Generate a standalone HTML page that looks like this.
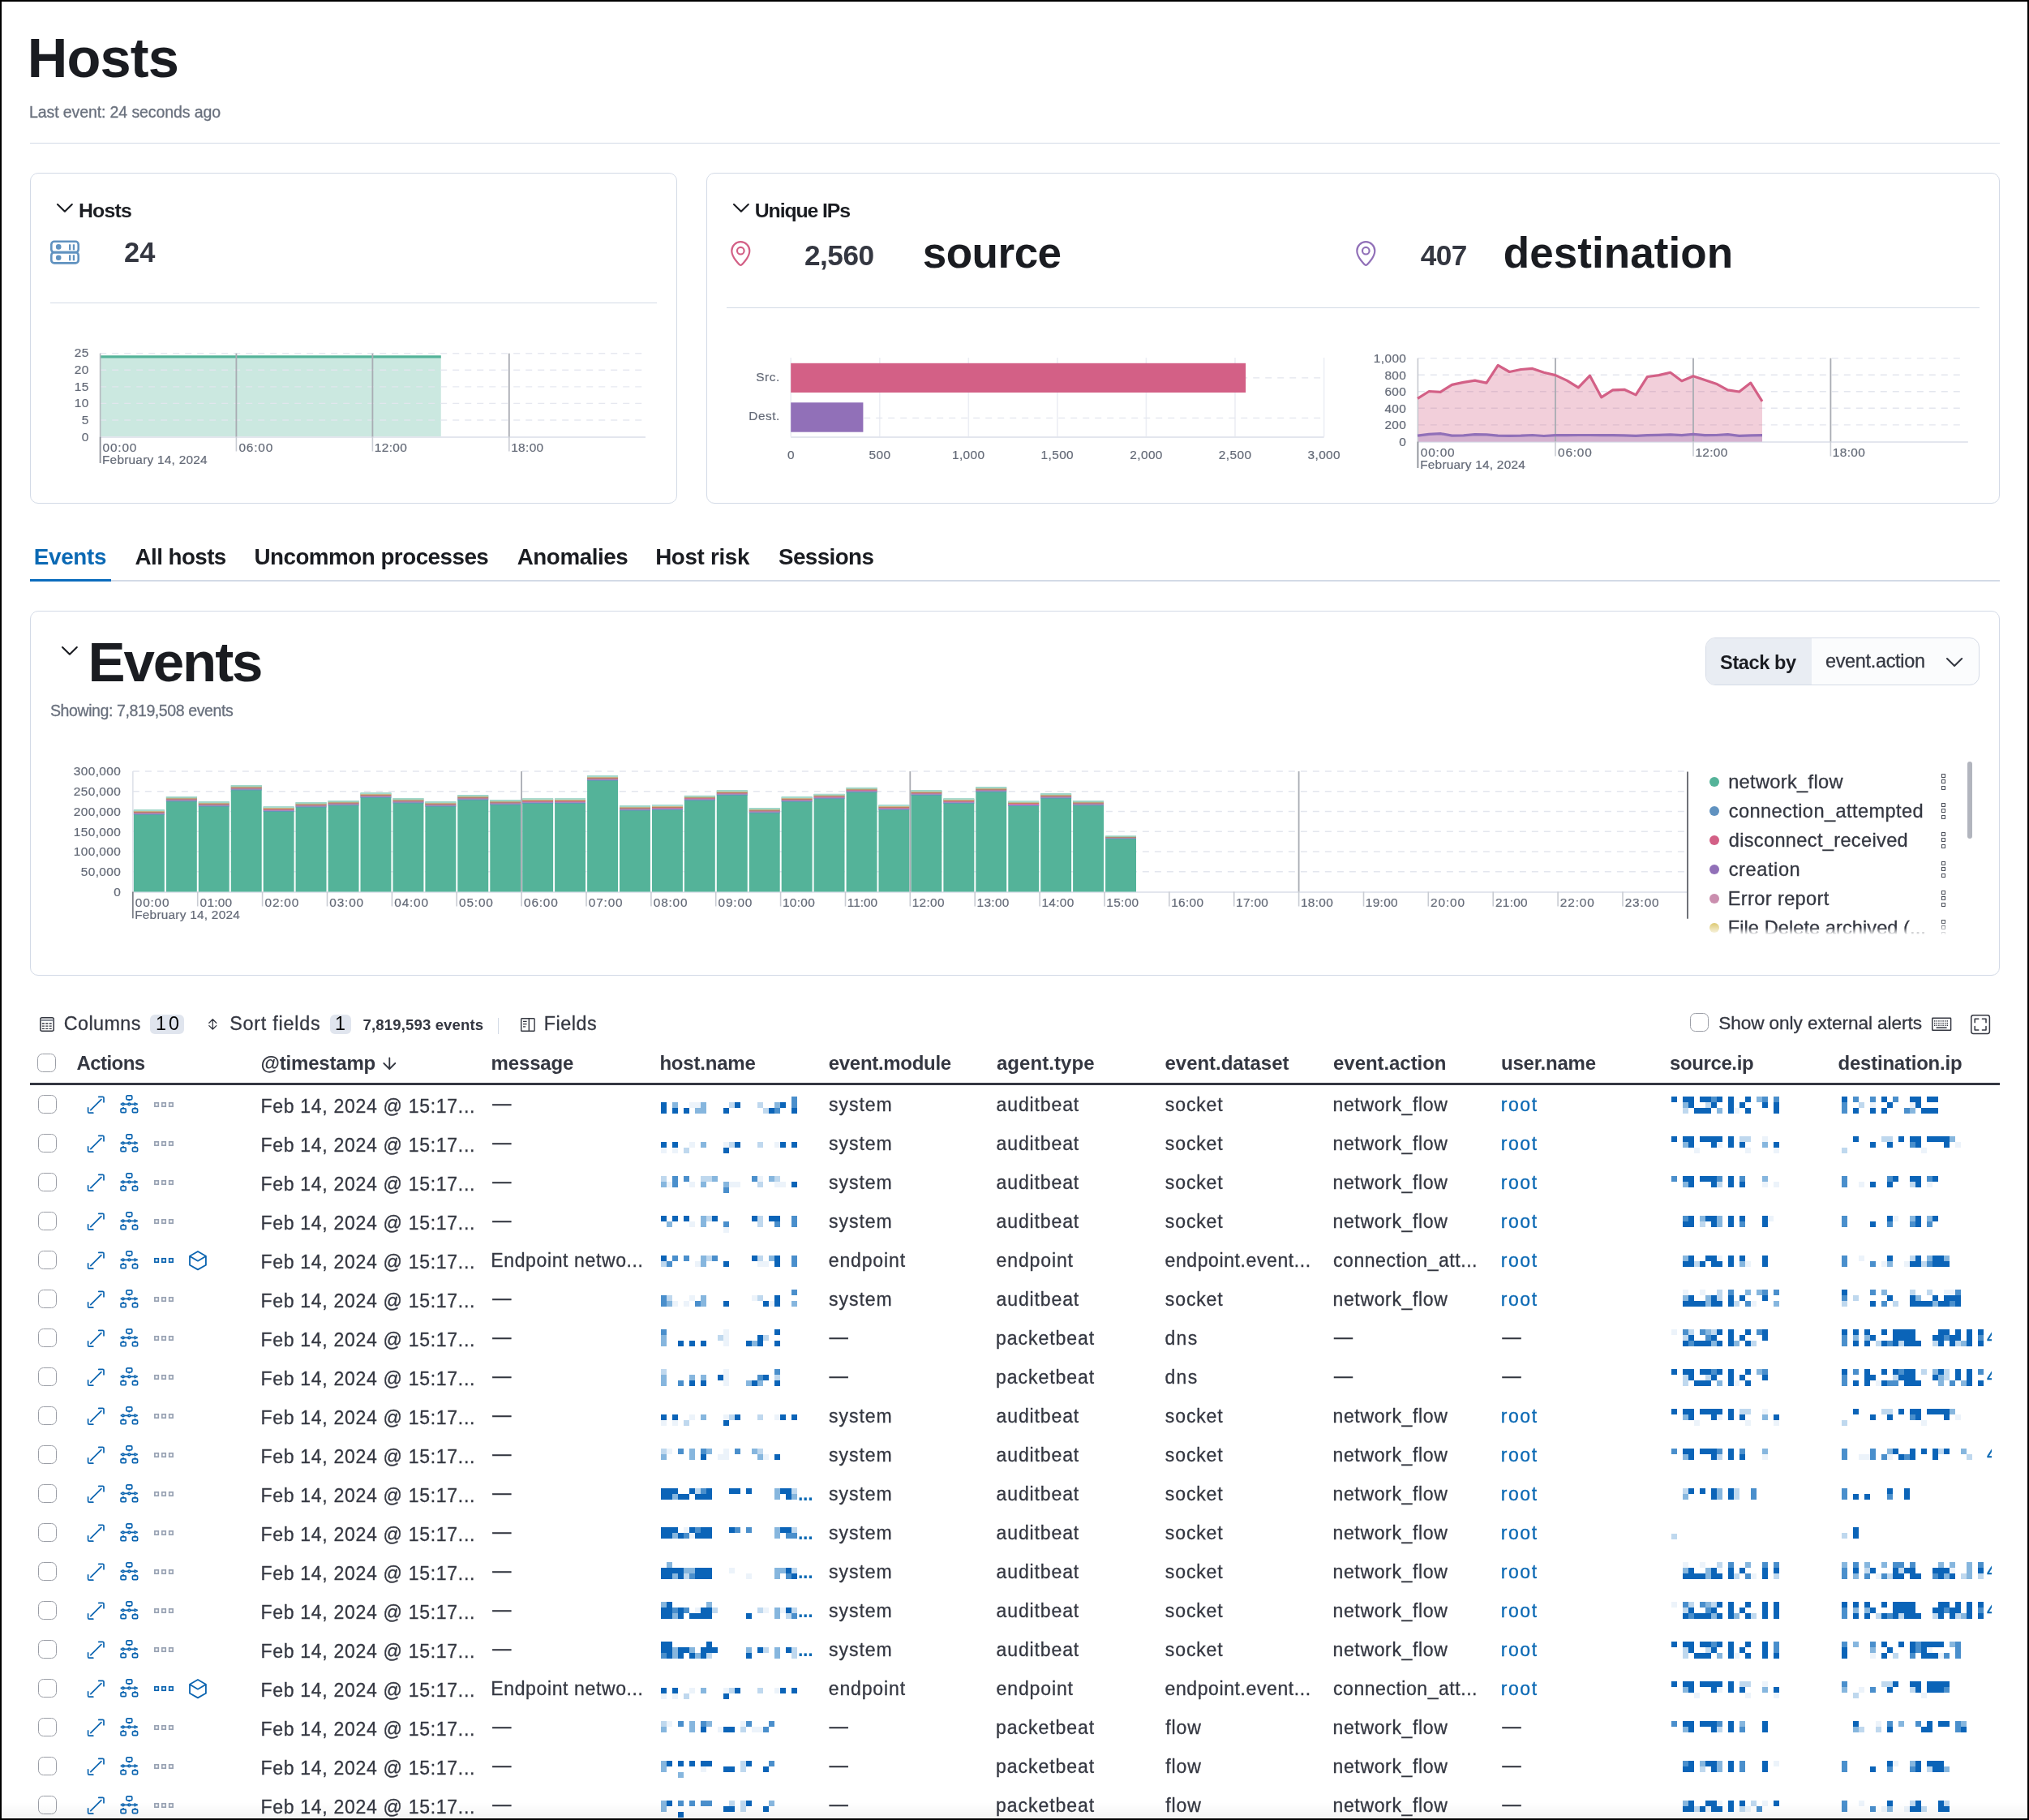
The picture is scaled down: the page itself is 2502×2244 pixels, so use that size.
<!DOCTYPE html>
<html lang="en"><head><meta charset="utf-8"><title>Hosts - Elastic Security</title>
<style>
*{box-sizing:border-box}
html,body{margin:0;padding:0}
body{width:2502px;height:2244px;overflow:hidden;background:#fff;font-family:"Liberation Sans", sans-serif;color:#343741;position:relative}
#page{position:absolute;left:0;top:0;width:2502px;height:2244px;overflow:hidden;will-change:transform}
#page div,#page svg,#page .t{position:absolute}
.t{white-space:nowrap;line-height:1;margin:0;font-weight:400;display:block}
.card{border:1.5px solid #d3dae6;border-radius:10px;background:#fff}
.hr{background:#d3dae6}
.cb{border:1.5px solid #9b9ea6;border-radius:6.5px;background:#fff}
#frame{position:absolute;left:0;top:0;width:2502px;height:2244px;border:2px solid #000;pointer-events:none}
</style></head>
<body><div id="page">
<header>
<h1 class="t" style="left:33.81px;top:38.00px;font-size:68.6px;font-weight:700;color:#1a1c21;letter-spacing:-0.894px;">Hosts</h1>
<span class="t" style="left:36.00px;top:129.00px;font-size:19.5px;color:#69707d;letter-spacing:-0.100px;-webkit-text-stroke:0.3px;">Last event: 24 seconds ago</span>
<div class="hr" style="left:37.0px;top:175.5px;width:2429.0px;height:1.5px;"></div>
</header>
<section aria-label="Hosts">
<div class="card" style="left:37.0px;top:213.0px;width:798.0px;height:408.0px;"></div>
<svg style="left:69px;top:250px" width="21.8" height="13.2" viewBox="69 250 21.8 13.2" ><path d="M71 252 L79.9 260.7 L88.8 252" fill="none" stroke="#1a1c21" stroke-width="2.1" stroke-linecap="round" stroke-linejoin="round"/></svg>
<h2 class="t" style="left:96.94px;top:248.00px;font-size:24.8px;font-weight:700;color:#1a1c21;letter-spacing:-0.733px;">Hosts</h2>
<svg style="left:60px;top:295px" width="40" height="33" viewBox="60 295 40 33" ><g fill="none" stroke="#6092c0" stroke-width="2.6"><rect x="63.3" y="297.8" width="33.4" height="13.3" rx="3.6"/><rect x="63.3" y="311.1" width="33.4" height="13.3" rx="3.6"/></g>
<g fill="#6092c0"><circle cx="72.2" cy="304.4" r="3.3"/><circle cx="72.2" cy="317.7" r="3.3"/><rect x="85" y="301.3" width="2.3" height="7"/><rect x="89.8" y="301.3" width="2.3" height="7"/><rect x="85" y="314.3" width="2.3" height="7"/><rect x="89.8" y="314.3" width="2.3" height="7"/></g></svg>
<span class="t" style="left:153.01px;top:294.00px;font-size:34.4px;font-weight:700;letter-spacing:0.112px;">24</span>
<div class="hr" style="left:62.0px;top:372.6px;width:748.0px;height:1.5px;"></div>
<svg style="left:100px;top:425px" width="710" height="160" viewBox="100 425 710 160" ><rect x="123.2" y="439.8" width="420.59999999999997" height="98.80000000000001" fill="#54b399" fill-opacity="0.3"/><line x1="123.2" x2="792.0" y1="435.7" y2="435.7" stroke="#e3e6ee" stroke-width="1.4" stroke-dasharray="8 7" stroke-opacity="0.9"/><line x1="123.2" x2="792.0" y1="456.3" y2="456.3" stroke="#e3e6ee" stroke-width="1.4" stroke-dasharray="8 7" stroke-opacity="0.9"/><line x1="123.2" x2="792.0" y1="476.9" y2="476.9" stroke="#e3e6ee" stroke-width="1.4" stroke-dasharray="8 7" stroke-opacity="0.9"/><line x1="123.2" x2="792.0" y1="497.4" y2="497.4" stroke="#e3e6ee" stroke-width="1.4" stroke-dasharray="8 7" stroke-opacity="0.9"/><line x1="123.2" x2="792.0" y1="518.0" y2="518.0" stroke="#e3e6ee" stroke-width="1.4" stroke-dasharray="8 7" stroke-opacity="0.9"/><line x1="123.2" x2="796.0" y1="539.1" y2="539.1" stroke="#e3e6ee" stroke-width="2"/><line x1="123.2" x2="543.8" y1="439.8" y2="439.8" stroke="#54b399" stroke-width="3.2"/><line x1="123.6" x2="123.6" y1="435.7" y2="538.6" stroke="#b5b8bf" stroke-width="1.6"/><line x1="123.6" x2="123.6" y1="538.6" y2="571" stroke="#8b8e96" stroke-width="1.8"/><line x1="291.4" x2="291.4" y1="435.7" y2="538.6" stroke="#a9acb3" stroke-width="1.8"/><line x1="291.4" x2="291.4" y1="538.6" y2="556.5" stroke="#c9ccd3" stroke-width="1.6"/><line x1="459.4" x2="459.4" y1="435.7" y2="538.6" stroke="#a9acb3" stroke-width="1.8"/><line x1="459.4" x2="459.4" y1="538.6" y2="556.5" stroke="#c9ccd3" stroke-width="1.6"/><line x1="627.8" x2="627.8" y1="435.7" y2="538.6" stroke="#a9acb3" stroke-width="1.8"/><line x1="627.8" x2="627.8" y1="538.6" y2="556.5" stroke="#c9ccd3" stroke-width="1.6"/></svg>
<span class="t" style="left:91.72px;top:427.00px;font-size:15.4px;color:#646a77;letter-spacing:0.400px;-webkit-text-stroke:0.2px;">25</span>
<span class="t" style="left:91.68px;top:448.00px;font-size:15.4px;color:#646a77;letter-spacing:0.400px;-webkit-text-stroke:0.2px;">20</span>
<span class="t" style="left:91.72px;top:469.00px;font-size:15.4px;color:#646a77;letter-spacing:0.400px;-webkit-text-stroke:0.2px;">15</span>
<span class="t" style="left:91.68px;top:489.00px;font-size:15.4px;color:#646a77;letter-spacing:0.400px;-webkit-text-stroke:0.2px;">10</span>
<span class="t" style="left:100.68px;top:510.00px;font-size:15.4px;color:#646a77;letter-spacing:0.400px;-webkit-text-stroke:0.2px;">5</span>
<span class="t" style="left:100.64px;top:531.00px;font-size:15.4px;color:#646a77;letter-spacing:0.400px;-webkit-text-stroke:0.2px;">0</span>
<span class="t" style="left:126.60px;top:544.00px;font-size:15.4px;color:#646a77;letter-spacing:0.822px;-webkit-text-stroke:0.2px;">00:00</span>
<span class="t" style="left:294.40px;top:544.00px;font-size:15.4px;color:#646a77;letter-spacing:0.822px;-webkit-text-stroke:0.2px;">06:00</span>
<span class="t" style="left:461.83px;top:544.00px;font-size:15.4px;color:#646a77;letter-spacing:0.340px;-webkit-text-stroke:0.2px;">12:00</span>
<span class="t" style="left:630.23px;top:544.00px;font-size:15.4px;color:#646a77;letter-spacing:0.340px;-webkit-text-stroke:0.2px;">18:00</span>
<span class="t" style="left:125.94px;top:559.00px;font-size:15.4px;color:#646a77;letter-spacing:0.246px;-webkit-text-stroke:0.2px;">February 14, 2024</span>
</section>
<section aria-label="Unique IPs">
<div class="card" style="left:871.0px;top:213.0px;width:1595.0px;height:408.0px;"></div>
<svg style="left:903px;top:250px" width="21.8" height="13.2" viewBox="903 250 21.8 13.2" ><path d="M905 252 L913.9 260.7 L922.8 252" fill="none" stroke="#1a1c21" stroke-width="2.1" stroke-linecap="round" stroke-linejoin="round"/></svg>
<h2 class="t" style="left:930.81px;top:248.00px;font-size:24.8px;font-weight:700;color:#1a1c21;letter-spacing:-1.104px;">Unique IPs</h2>
<svg style="left:898.5px;top:295.2px" width="30" height="36" viewBox="898.5 295.2 30 36" ><g transform="translate(900.5,297.2)" fill="none" stroke="#d36086" stroke-width="2.2"><path d="M12.3 30 C11.4 30 1.3 20.6 1.3 12.2 A11 11 0 0 1 23.3 12.2 C23.3 20.6 13.2 30 12.3 30 Z" stroke-linejoin="round"/><circle cx="12.3" cy="12.2" r="4.3"/></g></svg>
<span class="t" style="left:991.98px;top:297.00px;font-size:35.2px;font-weight:700;letter-spacing:-0.500px;">2,560</span>
<span class="t" style="left:1137.74px;top:285.00px;font-size:53px;font-weight:700;color:#1a1c21;letter-spacing:-0.488px;">source</span>
<svg style="left:1670.3px;top:295.2px" width="30" height="36" viewBox="1670.3 295.2 30 36" ><g transform="translate(1672.3,297.2)" fill="none" stroke="#9170b8" stroke-width="2.2"><path d="M12.3 30 C11.4 30 1.3 20.6 1.3 12.2 A11 11 0 0 1 23.3 12.2 C23.3 20.6 13.2 30 12.3 30 Z" stroke-linejoin="round"/><circle cx="12.3" cy="12.2" r="4.3"/></g></svg>
<span class="t" style="left:1751.87px;top:297.00px;font-size:35.2px;font-weight:700;letter-spacing:-0.670px;">407</span>
<span class="t" style="left:1853.73px;top:285.00px;font-size:53px;font-weight:700;color:#1a1c21;letter-spacing:0.067px;">destination</span>
<div class="hr" style="left:896.0px;top:378.5px;width:1545.0px;height:1.5px;"></div>
<svg style="left:960px;top:430px" width="700" height="120" viewBox="960 430 700 120" ><line x1="975.2" x2="975.2" y1="441.0" y2="538.6" stroke="#eceef4" stroke-width="1.6"/><line x1="1084.8" x2="1084.8" y1="441.0" y2="538.6" stroke="#eceef4" stroke-width="1.6"/><line x1="1194.3" x2="1194.3" y1="441.0" y2="538.6" stroke="#eceef4" stroke-width="1.6"/><line x1="1303.9" x2="1303.9" y1="441.0" y2="538.6" stroke="#eceef4" stroke-width="1.6"/><line x1="1413.4" x2="1413.4" y1="441.0" y2="538.6" stroke="#eceef4" stroke-width="1.6"/><line x1="1523.0" x2="1523.0" y1="441.0" y2="538.6" stroke="#eceef4" stroke-width="1.6"/><line x1="1632.6" x2="1632.6" y1="441.0" y2="538.6" stroke="#eceef4" stroke-width="1.6"/><line x1="975.2" x2="1628.6" y1="465.9" y2="465.9" stroke="#e3e6ee" stroke-width="1.4" stroke-dasharray="8 7"/><line x1="975.2" x2="1628.6" y1="515.4" y2="515.4" stroke="#e3e6ee" stroke-width="1.4" stroke-dasharray="8 7"/><line x1="975.2" x2="1632.6" y1="539.1" y2="539.1" stroke="#e3e6ee" stroke-width="2"/><rect x="975.2" y="447.8" width="560.9" height="36.2" fill="#d36086"/><rect x="975.2" y="496.3" width="89.2" height="36.4" fill="#9170b8"/></svg>
<span class="t" style="left:932.33px;top:457.00px;font-size:15.4px;color:#646a77;letter-spacing:0.500px;-webkit-text-stroke:0.2px;">Src.</span>
<span class="t" style="left:923.28px;top:505.00px;font-size:15.4px;color:#646a77;letter-spacing:0.500px;-webkit-text-stroke:0.2px;">Dest.</span>
<span class="t" style="left:970.92px;top:553.00px;font-size:15.4px;color:#646a77;letter-spacing:0.400px;-webkit-text-stroke:0.2px;">0</span>
<span class="t" style="left:1071.51px;top:553.00px;font-size:15.4px;color:#646a77;letter-spacing:0.400px;-webkit-text-stroke:0.2px;">500</span>
<span class="t" style="left:1173.98px;top:553.00px;font-size:15.4px;color:#646a77;letter-spacing:0.400px;-webkit-text-stroke:0.2px;">1,000</span>
<span class="t" style="left:1283.54px;top:553.00px;font-size:15.4px;color:#646a77;letter-spacing:0.400px;-webkit-text-stroke:0.2px;">1,500</span>
<span class="t" style="left:1393.30px;top:553.00px;font-size:15.4px;color:#646a77;letter-spacing:0.400px;-webkit-text-stroke:0.2px;">2,000</span>
<span class="t" style="left:1502.86px;top:553.00px;font-size:15.4px;color:#646a77;letter-spacing:0.400px;-webkit-text-stroke:0.2px;">2,500</span>
<span class="t" style="left:1612.51px;top:553.00px;font-size:15.4px;color:#646a77;letter-spacing:0.400px;-webkit-text-stroke:0.2px;">3,000</span>
<svg style="left:1700px;top:430px" width="740" height="160" viewBox="1700 430 740 160" ><line x1="1748.8" x2="2422.8" y1="441.6" y2="441.6" stroke="#e3e6ee" stroke-width="1.4" stroke-dasharray="8 7"/><line x1="1748.8" x2="2422.8" y1="462.2" y2="462.2" stroke="#e3e6ee" stroke-width="1.4" stroke-dasharray="8 7"/><line x1="1748.8" x2="2422.8" y1="482.8" y2="482.8" stroke="#e3e6ee" stroke-width="1.4" stroke-dasharray="8 7"/><line x1="1748.8" x2="2422.8" y1="503.3" y2="503.3" stroke="#e3e6ee" stroke-width="1.4" stroke-dasharray="8 7"/><line x1="1748.8" x2="2422.8" y1="523.9" y2="523.9" stroke="#e3e6ee" stroke-width="1.4" stroke-dasharray="8 7"/><line x1="1748.8" x2="2426.8" y1="545.0" y2="545.0" stroke="#e3e6ee" stroke-width="2"/><polygon points="1748.0,544.5 1748.0,491.3 1762.2,482.5 1776.3,483.3 1790.5,474.4 1804.7,471.4 1818.8,469.1 1833.0,472.1 1847.2,450.4 1861.3,458.5 1875.5,455.5 1889.7,454.4 1903.8,459.3 1918.0,462.6 1932.2,469.1 1946.3,477.9 1960.5,463.2 1974.7,489.8 1988.8,480.9 2003.0,480.3 2017.2,486.9 2031.3,464.6 2045.5,462.6 2059.7,459.3 2073.8,469.7 2088.0,463.8 2102.2,468.5 2116.3,473.2 2130.5,480.9 2144.7,483.0 2158.8,472.1 2173.0,494.8 2173.0,544.5" fill="#d36086" fill-opacity="0.3"/><polygon points="1748.0,544.5 1748.0,537.1 1762.2,535.4 1776.3,534.6 1790.5,537.1 1804.7,536.8 1818.8,535.7 1833.0,535.9 1847.2,537.1 1861.3,537.3 1875.5,537.1 1889.7,536.5 1903.8,537.5 1918.0,536.7 1932.2,536.7 1946.3,536.5 1960.5,536.5 1974.7,536.7 1988.8,536.7 2003.0,536.9 2017.2,537.3 2031.3,536.7 2045.5,536.3 2059.7,535.9 2073.8,536.7 2088.0,535.4 2102.2,536.7 2116.3,536.5 2130.5,535.7 2144.7,537.3 2158.8,536.9 2173.0,536.7 2173.0,544.5" fill="#9170b8" fill-opacity="0.3"/><line x1="1748.4" x2="1748.4" y1="441.6" y2="544.5" stroke="#c5c8cf" stroke-width="1.6"/><line x1="1748.4" x2="1748.4" y1="544.5" y2="577" stroke="#8b8e96" stroke-width="1.8"/><line x1="1918.0" x2="1918.0" y1="441.6" y2="544.5" stroke="#a9acb3" stroke-width="1.8"/><line x1="1918.0" x2="1918.0" y1="544.5" y2="562.5" stroke="#c9ccd3" stroke-width="1.6"/><line x1="2088.0" x2="2088.0" y1="441.6" y2="544.5" stroke="#a9acb3" stroke-width="1.8"/><line x1="2088.0" x2="2088.0" y1="544.5" y2="562.5" stroke="#c9ccd3" stroke-width="1.6"/><line x1="2257.4" x2="2257.4" y1="441.6" y2="544.5" stroke="#a9acb3" stroke-width="1.8"/><line x1="2257.4" x2="2257.4" y1="544.5" y2="562.5" stroke="#c9ccd3" stroke-width="1.6"/><polyline points="1748.0,491.3 1762.2,482.5 1776.3,483.3 1790.5,474.4 1804.7,471.4 1818.8,469.1 1833.0,472.1 1847.2,450.4 1861.3,458.5 1875.5,455.5 1889.7,454.4 1903.8,459.3 1918.0,462.6 1932.2,469.1 1946.3,477.9 1960.5,463.2 1974.7,489.8 1988.8,480.9 2003.0,480.3 2017.2,486.9 2031.3,464.6 2045.5,462.6 2059.7,459.3 2073.8,469.7 2088.0,463.8 2102.2,468.5 2116.3,473.2 2130.5,480.9 2144.7,483.0 2158.8,472.1 2173.0,494.8" fill="none" stroke="#d36086" stroke-width="3.2" stroke-linejoin="round"/><polyline points="1748.0,537.1 1762.2,535.4 1776.3,534.6 1790.5,537.1 1804.7,536.8 1818.8,535.7 1833.0,535.9 1847.2,537.1 1861.3,537.3 1875.5,537.1 1889.7,536.5 1903.8,537.5 1918.0,536.7 1932.2,536.7 1946.3,536.5 1960.5,536.5 1974.7,536.7 1988.8,536.7 2003.0,536.9 2017.2,537.3 2031.3,536.7 2045.5,536.3 2059.7,535.9 2073.8,536.7 2088.0,535.4 2102.2,536.7 2116.3,536.5 2130.5,535.7 2144.7,537.3 2158.8,536.9 2173.0,536.7" fill="none" stroke="#9170b8" stroke-width="3.2" stroke-linejoin="round"/></svg>
<span class="t" style="left:1693.79px;top:434.00px;font-size:15.4px;color:#646a77;letter-spacing:0.400px;-webkit-text-stroke:0.2px;">1,000</span>
<span class="t" style="left:1707.41px;top:455.00px;font-size:15.4px;color:#646a77;letter-spacing:0.400px;-webkit-text-stroke:0.2px;">800</span>
<span class="t" style="left:1707.41px;top:475.00px;font-size:15.4px;color:#646a77;letter-spacing:0.400px;-webkit-text-stroke:0.2px;">600</span>
<span class="t" style="left:1707.41px;top:496.00px;font-size:15.4px;color:#646a77;letter-spacing:0.400px;-webkit-text-stroke:0.2px;">400</span>
<span class="t" style="left:1707.41px;top:516.00px;font-size:15.4px;color:#646a77;letter-spacing:0.400px;-webkit-text-stroke:0.2px;">200</span>
<span class="t" style="left:1725.34px;top:537.00px;font-size:15.4px;color:#646a77;letter-spacing:0.400px;-webkit-text-stroke:0.2px;">0</span>
<span class="t" style="left:1751.80px;top:550.00px;font-size:15.4px;color:#646a77;letter-spacing:0.822px;-webkit-text-stroke:0.2px;">00:00</span>
<span class="t" style="left:1921.00px;top:550.00px;font-size:15.4px;color:#646a77;letter-spacing:0.822px;-webkit-text-stroke:0.2px;">06:00</span>
<span class="t" style="left:2090.43px;top:550.00px;font-size:15.4px;color:#646a77;letter-spacing:0.340px;-webkit-text-stroke:0.2px;">12:00</span>
<span class="t" style="left:2259.83px;top:550.00px;font-size:15.4px;color:#646a77;letter-spacing:0.340px;-webkit-text-stroke:0.2px;">18:00</span>
<span class="t" style="left:1751.14px;top:565.00px;font-size:15.4px;color:#646a77;letter-spacing:0.246px;-webkit-text-stroke:0.2px;">February 14, 2024</span>
</section>
<nav role="tablist">
<div class="hr" style="left:37.0px;top:715.2px;width:2429.0px;height:2.0px;"></div>
<div style="left:37.0px;top:714.0px;width:100.0px;height:3.0px;background:#0b6cbd"></div>
<span class="t" style="left:41.84px;top:673.00px;font-size:27.8px;font-weight:700;color:#0b69b4;letter-spacing:-0.311px;">Events</span>
<span class="t" style="left:166.61px;top:673.00px;font-size:27.8px;font-weight:700;color:#1a1c21;letter-spacing:-0.582px;">All hosts</span>
<span class="t" style="left:313.43px;top:673.00px;font-size:27.8px;font-weight:700;color:#1a1c21;letter-spacing:-0.514px;">Uncommon processes</span>
<span class="t" style="left:637.71px;top:673.00px;font-size:27.8px;font-weight:700;color:#1a1c21;letter-spacing:-0.443px;">Anomalies</span>
<span class="t" style="left:808.14px;top:673.00px;font-size:27.8px;font-weight:700;color:#1a1c21;letter-spacing:-0.340px;">Host risk</span>
<span class="t" style="left:960.00px;top:673.00px;font-size:27.8px;font-weight:700;color:#1a1c21;letter-spacing:-0.603px;">Sessions</span>
</nav>
<section aria-label="Events histogram">
<div class="card" style="left:37.0px;top:753.0px;width:2429.0px;height:450.0px;"></div>
<svg style="left:74.8px;top:796px" width="21.8" height="13.2" viewBox="74.8 796 21.8 13.2" ><path d="M76.8 798 L85.7 806.7 L94.6 798" fill="none" stroke="#1a1c21" stroke-width="2.1" stroke-linecap="round" stroke-linejoin="round"/></svg>
<h2 class="t" style="left:108.58px;top:782.00px;font-size:69px;font-weight:700;color:#1a1c21;letter-spacing:-2.087px;">Events</h2>
<span class="t" style="left:62.01px;top:867.00px;font-size:19.5px;color:#69707d;letter-spacing:-0.399px;-webkit-text-stroke:0.3px;">Showing: 7,819,508 events</span>
<div style="left:2102.6px;top:786.4px;width:338.0px;height:58.6px;border:1.5px solid #d5dbe6;border-radius:12px;background:#fbfcfd;overflow:hidden"><div style="left:0;top:0;width:130.6px;height:100%;background:#e9edf3"></div></div>
<span class="t" style="left:2121.12px;top:806.00px;font-size:23.6px;font-weight:700;color:#1a1c21;letter-spacing:-0.451px;">Stack by</span>
<span class="t" style="left:2251.01px;top:804.00px;font-size:23.4px;letter-spacing:-0.293px;-webkit-text-stroke:0.3px;">event.action</span>
<svg style="left:2398.9px;top:809.8px" width="22.2" height="13.4" viewBox="2398.9 809.8 22.2 13.4" ><path d="M2400.9 811.8 L2410.0 820.6999999999999 L2419.1 811.8" fill="none" stroke="#343741" stroke-width="2.1" stroke-linecap="round" stroke-linejoin="round"/></svg>
<svg style="left:140px;top:940px" width="1960" height="200" viewBox="140 940 1960 200" ><line x1="163.85" x2="2076.8" y1="951.0" y2="951.0" stroke="#e3e6ee" stroke-width="1.4" stroke-dasharray="8 7"/><line x1="163.85" x2="2076.8" y1="975.8" y2="975.8" stroke="#e3e6ee" stroke-width="1.4" stroke-dasharray="8 7"/><line x1="163.85" x2="2076.8" y1="1000.5" y2="1000.5" stroke="#e3e6ee" stroke-width="1.4" stroke-dasharray="8 7"/><line x1="163.85" x2="2076.8" y1="1025.2" y2="1025.2" stroke="#e3e6ee" stroke-width="1.4" stroke-dasharray="8 7"/><line x1="163.85" x2="2076.8" y1="1050.0" y2="1050.0" stroke="#e3e6ee" stroke-width="1.4" stroke-dasharray="8 7"/><line x1="163.85" x2="2076.8" y1="1074.8" y2="1074.8" stroke="#e3e6ee" stroke-width="1.4" stroke-dasharray="8 7"/><line x1="163.85" x2="2080.8" y1="1100.1" y2="1100.1" stroke="#e3e6ee" stroke-width="2"/><line x1="163.85" x2="163.85" y1="951.0" y2="1099.5" stroke="#dfe2ea" stroke-width="1.6"/><rect x="164.9" y="998.4" width="37.9" height="101.1" fill="#54b399"/><rect x="164.9" y="1003.70" width="37.9" height="0.95" fill="#6092c0"/><rect x="164.9" y="1002.70" width="37.9" height="1.05" fill="#b585c4"/><rect x="164.9" y="1001.60" width="37.9" height="1.15" fill="#dc6a9a"/><rect x="164.9" y="1000.80" width="37.9" height="0.85" fill="#cf7a4f"/><rect x="164.9" y="999.90" width="37.9" height="0.95" fill="#d9b588"/><rect x="164.9" y="998.40" width="37.9" height="1.55" fill="#aadccf"/><rect x="204.9" y="982.1" width="37.9" height="117.4" fill="#54b399"/><rect x="204.9" y="987.40" width="37.9" height="0.95" fill="#6092c0"/><rect x="204.9" y="986.40" width="37.9" height="1.05" fill="#b585c4"/><rect x="204.9" y="985.30" width="37.9" height="1.15" fill="#dc6a9a"/><rect x="204.9" y="984.50" width="37.9" height="0.85" fill="#cf7a4f"/><rect x="204.9" y="983.60" width="37.9" height="0.95" fill="#d9b588"/><rect x="204.9" y="982.10" width="37.9" height="1.55" fill="#aadccf"/><rect x="244.8" y="988.3" width="37.9" height="111.2" fill="#54b399"/><rect x="244.8" y="993.60" width="37.9" height="0.95" fill="#6092c0"/><rect x="244.8" y="992.60" width="37.9" height="1.05" fill="#b585c4"/><rect x="244.8" y="991.50" width="37.9" height="1.15" fill="#dc6a9a"/><rect x="244.8" y="990.70" width="37.9" height="0.85" fill="#cf7a4f"/><rect x="244.8" y="989.80" width="37.9" height="0.95" fill="#d9b588"/><rect x="244.8" y="988.30" width="37.9" height="1.55" fill="#aadccf"/><rect x="284.8" y="968.2" width="37.9" height="131.3" fill="#54b399"/><rect x="284.8" y="973.50" width="37.9" height="0.95" fill="#6092c0"/><rect x="284.8" y="972.50" width="37.9" height="1.05" fill="#b585c4"/><rect x="284.8" y="971.40" width="37.9" height="1.15" fill="#dc6a9a"/><rect x="284.8" y="970.60" width="37.9" height="0.85" fill="#cf7a4f"/><rect x="284.8" y="969.70" width="37.9" height="0.95" fill="#d9b588"/><rect x="284.8" y="968.20" width="37.9" height="1.55" fill="#aadccf"/><rect x="324.7" y="994.5" width="37.9" height="105.0" fill="#54b399"/><rect x="324.7" y="999.80" width="37.9" height="0.95" fill="#6092c0"/><rect x="324.7" y="998.80" width="37.9" height="1.05" fill="#b585c4"/><rect x="324.7" y="997.70" width="37.9" height="1.15" fill="#dc6a9a"/><rect x="324.7" y="996.90" width="37.9" height="0.85" fill="#cf7a4f"/><rect x="324.7" y="996.00" width="37.9" height="0.95" fill="#d9b588"/><rect x="324.7" y="994.50" width="37.9" height="1.55" fill="#aadccf"/><rect x="364.6" y="989.2" width="37.9" height="110.3" fill="#54b399"/><rect x="364.6" y="994.50" width="37.9" height="0.95" fill="#6092c0"/><rect x="364.6" y="993.50" width="37.9" height="1.05" fill="#b585c4"/><rect x="364.6" y="992.40" width="37.9" height="1.15" fill="#dc6a9a"/><rect x="364.6" y="991.60" width="37.9" height="0.85" fill="#cf7a4f"/><rect x="364.6" y="990.70" width="37.9" height="0.95" fill="#d9b588"/><rect x="364.6" y="989.20" width="37.9" height="1.55" fill="#aadccf"/><rect x="404.6" y="987.1" width="37.9" height="112.4" fill="#54b399"/><rect x="404.6" y="992.40" width="37.9" height="0.95" fill="#6092c0"/><rect x="404.6" y="991.40" width="37.9" height="1.05" fill="#b585c4"/><rect x="404.6" y="990.30" width="37.9" height="1.15" fill="#dc6a9a"/><rect x="404.6" y="989.50" width="37.9" height="0.85" fill="#cf7a4f"/><rect x="404.6" y="988.60" width="37.9" height="0.95" fill="#d9b588"/><rect x="404.6" y="987.10" width="37.9" height="1.55" fill="#aadccf"/><rect x="444.5" y="977.4" width="37.9" height="122.1" fill="#54b399"/><rect x="444.5" y="982.70" width="37.9" height="0.95" fill="#6092c0"/><rect x="444.5" y="981.70" width="37.9" height="1.05" fill="#b585c4"/><rect x="444.5" y="980.60" width="37.9" height="1.15" fill="#dc6a9a"/><rect x="444.5" y="979.80" width="37.9" height="0.85" fill="#cf7a4f"/><rect x="444.5" y="978.90" width="37.9" height="0.95" fill="#d9b588"/><rect x="444.5" y="977.40" width="37.9" height="1.55" fill="#aadccf"/><rect x="484.5" y="984.2" width="37.9" height="115.3" fill="#54b399"/><rect x="484.5" y="989.50" width="37.9" height="0.95" fill="#6092c0"/><rect x="484.5" y="988.50" width="37.9" height="1.05" fill="#b585c4"/><rect x="484.5" y="987.40" width="37.9" height="1.15" fill="#dc6a9a"/><rect x="484.5" y="986.60" width="37.9" height="0.85" fill="#cf7a4f"/><rect x="484.5" y="985.70" width="37.9" height="0.95" fill="#d9b588"/><rect x="484.5" y="984.20" width="37.9" height="1.55" fill="#aadccf"/><rect x="524.4" y="988.3" width="37.9" height="111.2" fill="#54b399"/><rect x="524.4" y="993.60" width="37.9" height="0.95" fill="#6092c0"/><rect x="524.4" y="992.60" width="37.9" height="1.05" fill="#b585c4"/><rect x="524.4" y="991.50" width="37.9" height="1.15" fill="#dc6a9a"/><rect x="524.4" y="990.70" width="37.9" height="0.85" fill="#cf7a4f"/><rect x="524.4" y="989.80" width="37.9" height="0.95" fill="#d9b588"/><rect x="524.4" y="988.30" width="37.9" height="1.55" fill="#aadccf"/><rect x="564.3" y="980.3" width="37.9" height="119.2" fill="#54b399"/><rect x="564.3" y="985.60" width="37.9" height="0.95" fill="#6092c0"/><rect x="564.3" y="984.60" width="37.9" height="1.05" fill="#b585c4"/><rect x="564.3" y="983.50" width="37.9" height="1.15" fill="#dc6a9a"/><rect x="564.3" y="982.70" width="37.9" height="0.85" fill="#cf7a4f"/><rect x="564.3" y="981.80" width="37.9" height="0.95" fill="#d9b588"/><rect x="564.3" y="980.30" width="37.9" height="1.55" fill="#aadccf"/><rect x="604.3" y="986.2" width="37.9" height="113.3" fill="#54b399"/><rect x="604.3" y="991.50" width="37.9" height="0.95" fill="#6092c0"/><rect x="604.3" y="990.50" width="37.9" height="1.05" fill="#b585c4"/><rect x="604.3" y="989.40" width="37.9" height="1.15" fill="#dc6a9a"/><rect x="604.3" y="988.60" width="37.9" height="0.85" fill="#cf7a4f"/><rect x="604.3" y="987.70" width="37.9" height="0.95" fill="#d9b588"/><rect x="604.3" y="986.20" width="37.9" height="1.55" fill="#aadccf"/><rect x="644.2" y="984.5" width="37.9" height="115.0" fill="#54b399"/><rect x="644.2" y="989.80" width="37.9" height="0.95" fill="#6092c0"/><rect x="644.2" y="988.80" width="37.9" height="1.05" fill="#b585c4"/><rect x="644.2" y="987.70" width="37.9" height="1.15" fill="#dc6a9a"/><rect x="644.2" y="986.90" width="37.9" height="0.85" fill="#cf7a4f"/><rect x="644.2" y="986.00" width="37.9" height="0.95" fill="#d9b588"/><rect x="644.2" y="984.50" width="37.9" height="1.55" fill="#aadccf"/><rect x="684.1" y="984.5" width="37.9" height="115.0" fill="#54b399"/><rect x="684.1" y="989.80" width="37.9" height="0.95" fill="#6092c0"/><rect x="684.1" y="988.80" width="37.9" height="1.05" fill="#b585c4"/><rect x="684.1" y="987.70" width="37.9" height="1.15" fill="#dc6a9a"/><rect x="684.1" y="986.90" width="37.9" height="0.85" fill="#cf7a4f"/><rect x="684.1" y="986.00" width="37.9" height="0.95" fill="#d9b588"/><rect x="684.1" y="984.50" width="37.9" height="1.55" fill="#aadccf"/><rect x="724.1" y="956.4" width="37.9" height="143.1" fill="#54b399"/><rect x="724.1" y="961.70" width="37.9" height="0.95" fill="#6092c0"/><rect x="724.1" y="960.70" width="37.9" height="1.05" fill="#b585c4"/><rect x="724.1" y="959.60" width="37.9" height="1.15" fill="#dc6a9a"/><rect x="724.1" y="958.80" width="37.9" height="0.85" fill="#cf7a4f"/><rect x="724.1" y="957.90" width="37.9" height="0.95" fill="#d9b588"/><rect x="724.1" y="956.40" width="37.9" height="1.55" fill="#aadccf"/><rect x="764.0" y="993.3" width="37.9" height="106.2" fill="#54b399"/><rect x="764.0" y="998.60" width="37.9" height="0.95" fill="#6092c0"/><rect x="764.0" y="997.60" width="37.9" height="1.05" fill="#b585c4"/><rect x="764.0" y="996.50" width="37.9" height="1.15" fill="#dc6a9a"/><rect x="764.0" y="995.70" width="37.9" height="0.85" fill="#cf7a4f"/><rect x="764.0" y="994.80" width="37.9" height="0.95" fill="#d9b588"/><rect x="764.0" y="993.30" width="37.9" height="1.55" fill="#aadccf"/><rect x="804.0" y="992.5" width="37.9" height="107.0" fill="#54b399"/><rect x="804.0" y="997.80" width="37.9" height="0.95" fill="#6092c0"/><rect x="804.0" y="996.80" width="37.9" height="1.05" fill="#b585c4"/><rect x="804.0" y="995.70" width="37.9" height="1.15" fill="#dc6a9a"/><rect x="804.0" y="994.90" width="37.9" height="0.85" fill="#cf7a4f"/><rect x="804.0" y="994.00" width="37.9" height="0.95" fill="#d9b588"/><rect x="804.0" y="992.50" width="37.9" height="1.55" fill="#aadccf"/><rect x="843.9" y="980.9" width="37.9" height="118.6" fill="#54b399"/><rect x="843.9" y="986.20" width="37.9" height="0.95" fill="#6092c0"/><rect x="843.9" y="985.20" width="37.9" height="1.05" fill="#b585c4"/><rect x="843.9" y="984.10" width="37.9" height="1.15" fill="#dc6a9a"/><rect x="843.9" y="983.30" width="37.9" height="0.85" fill="#cf7a4f"/><rect x="843.9" y="982.40" width="37.9" height="0.95" fill="#d9b588"/><rect x="843.9" y="980.90" width="37.9" height="1.55" fill="#aadccf"/><rect x="883.8" y="974.4" width="37.9" height="125.1" fill="#54b399"/><rect x="883.8" y="979.70" width="37.9" height="0.95" fill="#6092c0"/><rect x="883.8" y="978.70" width="37.9" height="1.05" fill="#b585c4"/><rect x="883.8" y="977.60" width="37.9" height="1.15" fill="#dc6a9a"/><rect x="883.8" y="976.80" width="37.9" height="0.85" fill="#cf7a4f"/><rect x="883.8" y="975.90" width="37.9" height="0.95" fill="#d9b588"/><rect x="883.8" y="974.40" width="37.9" height="1.55" fill="#aadccf"/><rect x="923.8" y="996.3" width="37.9" height="103.2" fill="#54b399"/><rect x="923.8" y="1001.60" width="37.9" height="0.95" fill="#6092c0"/><rect x="923.8" y="1000.60" width="37.9" height="1.05" fill="#b585c4"/><rect x="923.8" y="999.50" width="37.9" height="1.15" fill="#dc6a9a"/><rect x="923.8" y="998.70" width="37.9" height="0.85" fill="#cf7a4f"/><rect x="923.8" y="997.80" width="37.9" height="0.95" fill="#d9b588"/><rect x="923.8" y="996.30" width="37.9" height="1.55" fill="#aadccf"/><rect x="963.7" y="982.4" width="37.9" height="117.1" fill="#54b399"/><rect x="963.7" y="987.70" width="37.9" height="0.95" fill="#6092c0"/><rect x="963.7" y="986.70" width="37.9" height="1.05" fill="#b585c4"/><rect x="963.7" y="985.60" width="37.9" height="1.15" fill="#dc6a9a"/><rect x="963.7" y="984.80" width="37.9" height="0.85" fill="#cf7a4f"/><rect x="963.7" y="983.90" width="37.9" height="0.95" fill="#d9b588"/><rect x="963.7" y="982.40" width="37.9" height="1.55" fill="#aadccf"/><rect x="1003.6" y="978.9" width="37.9" height="120.6" fill="#54b399"/><rect x="1003.6" y="984.20" width="37.9" height="0.95" fill="#6092c0"/><rect x="1003.6" y="983.20" width="37.9" height="1.05" fill="#b585c4"/><rect x="1003.6" y="982.10" width="37.9" height="1.15" fill="#dc6a9a"/><rect x="1003.6" y="981.30" width="37.9" height="0.85" fill="#cf7a4f"/><rect x="1003.6" y="980.40" width="37.9" height="0.95" fill="#d9b588"/><rect x="1003.6" y="978.90" width="37.9" height="1.55" fill="#aadccf"/><rect x="1043.6" y="970.9" width="37.9" height="128.6" fill="#54b399"/><rect x="1043.6" y="976.20" width="37.9" height="0.95" fill="#6092c0"/><rect x="1043.6" y="975.20" width="37.9" height="1.05" fill="#b585c4"/><rect x="1043.6" y="974.10" width="37.9" height="1.15" fill="#dc6a9a"/><rect x="1043.6" y="973.30" width="37.9" height="0.85" fill="#cf7a4f"/><rect x="1043.6" y="972.40" width="37.9" height="0.95" fill="#d9b588"/><rect x="1043.6" y="970.90" width="37.9" height="1.55" fill="#aadccf"/><rect x="1083.5" y="992.5" width="37.9" height="107.0" fill="#54b399"/><rect x="1083.5" y="997.80" width="37.9" height="0.95" fill="#6092c0"/><rect x="1083.5" y="996.80" width="37.9" height="1.05" fill="#b585c4"/><rect x="1083.5" y="995.70" width="37.9" height="1.15" fill="#dc6a9a"/><rect x="1083.5" y="994.90" width="37.9" height="0.85" fill="#cf7a4f"/><rect x="1083.5" y="994.00" width="37.9" height="0.95" fill="#d9b588"/><rect x="1083.5" y="992.50" width="37.9" height="1.55" fill="#aadccf"/><rect x="1123.4" y="974.4" width="37.9" height="125.1" fill="#54b399"/><rect x="1123.4" y="979.70" width="37.9" height="0.95" fill="#6092c0"/><rect x="1123.4" y="978.70" width="37.9" height="1.05" fill="#b585c4"/><rect x="1123.4" y="977.60" width="37.9" height="1.15" fill="#dc6a9a"/><rect x="1123.4" y="976.80" width="37.9" height="0.85" fill="#cf7a4f"/><rect x="1123.4" y="975.90" width="37.9" height="0.95" fill="#d9b588"/><rect x="1123.4" y="974.40" width="37.9" height="1.55" fill="#aadccf"/><rect x="1163.4" y="984.5" width="37.9" height="115.0" fill="#54b399"/><rect x="1163.4" y="989.80" width="37.9" height="0.95" fill="#6092c0"/><rect x="1163.4" y="988.80" width="37.9" height="1.05" fill="#b585c4"/><rect x="1163.4" y="987.70" width="37.9" height="1.15" fill="#dc6a9a"/><rect x="1163.4" y="986.90" width="37.9" height="0.85" fill="#cf7a4f"/><rect x="1163.4" y="986.00" width="37.9" height="0.95" fill="#d9b588"/><rect x="1163.4" y="984.50" width="37.9" height="1.55" fill="#aadccf"/><rect x="1203.3" y="970.3" width="37.9" height="129.2" fill="#54b399"/><rect x="1203.3" y="975.60" width="37.9" height="0.95" fill="#6092c0"/><rect x="1203.3" y="974.60" width="37.9" height="1.05" fill="#b585c4"/><rect x="1203.3" y="973.50" width="37.9" height="1.15" fill="#dc6a9a"/><rect x="1203.3" y="972.70" width="37.9" height="0.85" fill="#cf7a4f"/><rect x="1203.3" y="971.80" width="37.9" height="0.95" fill="#d9b588"/><rect x="1203.3" y="970.30" width="37.9" height="1.55" fill="#aadccf"/><rect x="1243.3" y="987.7" width="37.9" height="111.8" fill="#54b399"/><rect x="1243.3" y="993.00" width="37.9" height="0.95" fill="#6092c0"/><rect x="1243.3" y="992.00" width="37.9" height="1.05" fill="#b585c4"/><rect x="1243.3" y="990.90" width="37.9" height="1.15" fill="#dc6a9a"/><rect x="1243.3" y="990.10" width="37.9" height="0.85" fill="#cf7a4f"/><rect x="1243.3" y="989.20" width="37.9" height="0.95" fill="#d9b588"/><rect x="1243.3" y="987.70" width="37.9" height="1.55" fill="#aadccf"/><rect x="1283.2" y="978.3" width="37.9" height="121.2" fill="#54b399"/><rect x="1283.2" y="983.60" width="37.9" height="0.95" fill="#6092c0"/><rect x="1283.2" y="982.60" width="37.9" height="1.05" fill="#b585c4"/><rect x="1283.2" y="981.50" width="37.9" height="1.15" fill="#dc6a9a"/><rect x="1283.2" y="980.70" width="37.9" height="0.85" fill="#cf7a4f"/><rect x="1283.2" y="979.80" width="37.9" height="0.95" fill="#d9b588"/><rect x="1283.2" y="978.30" width="37.9" height="1.55" fill="#aadccf"/><rect x="1323.1" y="987.1" width="37.9" height="112.4" fill="#54b399"/><rect x="1323.1" y="992.40" width="37.9" height="0.95" fill="#6092c0"/><rect x="1323.1" y="991.40" width="37.9" height="1.05" fill="#b585c4"/><rect x="1323.1" y="990.30" width="37.9" height="1.15" fill="#dc6a9a"/><rect x="1323.1" y="989.50" width="37.9" height="0.85" fill="#cf7a4f"/><rect x="1323.1" y="988.60" width="37.9" height="0.95" fill="#d9b588"/><rect x="1323.1" y="987.10" width="37.9" height="1.55" fill="#aadccf"/><rect x="1363.1" y="1030.6" width="37.9" height="68.9" fill="#54b399"/><rect x="1363.1" y="1033.78" width="37.9" height="0.59" fill="#6092c0"/><rect x="1363.1" y="1033.18" width="37.9" height="0.65" fill="#b585c4"/><rect x="1363.1" y="1032.52" width="37.9" height="0.71" fill="#dc6a9a"/><rect x="1363.1" y="1032.04" width="37.9" height="0.53" fill="#cf7a4f"/><rect x="1363.1" y="1031.50" width="37.9" height="0.59" fill="#d9b588"/><rect x="1363.1" y="1030.60" width="37.9" height="0.95" fill="#aadccf"/><line x1="643.1" x2="643.1" y1="951.0" y2="1099.5" stroke="#a9acb3" stroke-width="1.8"/><line x1="1122.3" x2="1122.3" y1="951.0" y2="1099.5" stroke="#a9acb3" stroke-width="1.8"/><line x1="1601.6" x2="1601.6" y1="951.0" y2="1099.5" stroke="#a9acb3" stroke-width="1.8"/><line x1="163.8" x2="163.8" y1="1099.5" y2="1132.3" stroke="#7d8088" stroke-width="1.8"/><line x1="243.7" x2="243.7" y1="1099.5" y2="1117.5" stroke="#c9ccd3" stroke-width="1.6"/><line x1="323.6" x2="323.6" y1="1099.5" y2="1117.5" stroke="#c9ccd3" stroke-width="1.6"/><line x1="403.5" x2="403.5" y1="1099.5" y2="1117.5" stroke="#c9ccd3" stroke-width="1.6"/><line x1="483.4" x2="483.4" y1="1099.5" y2="1117.5" stroke="#c9ccd3" stroke-width="1.6"/><line x1="563.2" x2="563.2" y1="1099.5" y2="1117.5" stroke="#c9ccd3" stroke-width="1.6"/><line x1="643.1" x2="643.1" y1="1099.5" y2="1117.5" stroke="#c9ccd3" stroke-width="1.6"/><line x1="723.0" x2="723.0" y1="1099.5" y2="1117.5" stroke="#c9ccd3" stroke-width="1.6"/><line x1="802.9" x2="802.9" y1="1099.5" y2="1117.5" stroke="#c9ccd3" stroke-width="1.6"/><line x1="882.7" x2="882.7" y1="1099.5" y2="1117.5" stroke="#c9ccd3" stroke-width="1.6"/><line x1="962.6" x2="962.6" y1="1099.5" y2="1117.5" stroke="#c9ccd3" stroke-width="1.6"/><line x1="1042.5" x2="1042.5" y1="1099.5" y2="1117.5" stroke="#c9ccd3" stroke-width="1.6"/><line x1="1122.3" x2="1122.3" y1="1099.5" y2="1117.5" stroke="#c9ccd3" stroke-width="1.6"/><line x1="1202.2" x2="1202.2" y1="1099.5" y2="1117.5" stroke="#c9ccd3" stroke-width="1.6"/><line x1="1282.1" x2="1282.1" y1="1099.5" y2="1117.5" stroke="#c9ccd3" stroke-width="1.6"/><line x1="1362.0" x2="1362.0" y1="1099.5" y2="1117.5" stroke="#c9ccd3" stroke-width="1.6"/><line x1="1441.8" x2="1441.8" y1="1099.5" y2="1117.5" stroke="#c9ccd3" stroke-width="1.6"/><line x1="1521.7" x2="1521.7" y1="1099.5" y2="1117.5" stroke="#c9ccd3" stroke-width="1.6"/><line x1="1601.6" x2="1601.6" y1="1099.5" y2="1117.5" stroke="#c9ccd3" stroke-width="1.6"/><line x1="1681.5" x2="1681.5" y1="1099.5" y2="1117.5" stroke="#c9ccd3" stroke-width="1.6"/><line x1="1761.3" x2="1761.3" y1="1099.5" y2="1117.5" stroke="#c9ccd3" stroke-width="1.6"/><line x1="1841.2" x2="1841.2" y1="1099.5" y2="1117.5" stroke="#c9ccd3" stroke-width="1.6"/><line x1="1921.1" x2="1921.1" y1="1099.5" y2="1117.5" stroke="#c9ccd3" stroke-width="1.6"/><line x1="2001.0" x2="2001.0" y1="1099.5" y2="1117.5" stroke="#c9ccd3" stroke-width="1.6"/><line x1="2081" x2="2081" y1="951.4" y2="1132.7" stroke="#6f7278" stroke-width="2"/></svg>
<span class="t" style="left:90.76px;top:943.00px;font-size:15.4px;color:#646a77;letter-spacing:0.400px;-webkit-text-stroke:0.2px;">300,000</span>
<span class="t" style="left:90.76px;top:968.00px;font-size:15.4px;color:#646a77;letter-spacing:0.400px;-webkit-text-stroke:0.2px;">250,000</span>
<span class="t" style="left:90.76px;top:993.00px;font-size:15.4px;color:#646a77;letter-spacing:0.400px;-webkit-text-stroke:0.2px;">200,000</span>
<span class="t" style="left:90.76px;top:1018.00px;font-size:15.4px;color:#646a77;letter-spacing:0.400px;-webkit-text-stroke:0.2px;">150,000</span>
<span class="t" style="left:90.76px;top:1042.00px;font-size:15.4px;color:#646a77;letter-spacing:0.400px;-webkit-text-stroke:0.2px;">100,000</span>
<span class="t" style="left:99.72px;top:1067.00px;font-size:15.4px;color:#646a77;letter-spacing:0.400px;-webkit-text-stroke:0.2px;">50,000</span>
<span class="t" style="left:140.24px;top:1092.00px;font-size:15.4px;color:#646a77;letter-spacing:0.400px;-webkit-text-stroke:0.2px;">0</span>
<span class="t" style="left:166.75px;top:1105.00px;font-size:15.4px;color:#646a77;letter-spacing:0.822px;-webkit-text-stroke:0.2px;">00:00</span>
<span class="t" style="left:246.62px;top:1105.00px;font-size:15.4px;color:#646a77;letter-spacing:0.247px;-webkit-text-stroke:0.2px;">01:00</span>
<span class="t" style="left:326.50px;top:1105.00px;font-size:15.4px;color:#646a77;letter-spacing:0.822px;-webkit-text-stroke:0.2px;">02:00</span>
<span class="t" style="left:406.37px;top:1105.00px;font-size:15.4px;color:#646a77;letter-spacing:0.822px;-webkit-text-stroke:0.2px;">03:00</span>
<span class="t" style="left:486.25px;top:1105.00px;font-size:15.4px;color:#646a77;letter-spacing:0.822px;-webkit-text-stroke:0.2px;">04:00</span>
<span class="t" style="left:566.12px;top:1105.00px;font-size:15.4px;color:#646a77;letter-spacing:0.822px;-webkit-text-stroke:0.2px;">05:00</span>
<span class="t" style="left:646.00px;top:1105.00px;font-size:15.4px;color:#646a77;letter-spacing:0.822px;-webkit-text-stroke:0.2px;">06:00</span>
<span class="t" style="left:725.87px;top:1105.00px;font-size:15.4px;color:#646a77;letter-spacing:0.822px;-webkit-text-stroke:0.2px;">07:00</span>
<span class="t" style="left:805.75px;top:1105.00px;font-size:15.4px;color:#646a77;letter-spacing:0.822px;-webkit-text-stroke:0.2px;">08:00</span>
<span class="t" style="left:885.62px;top:1105.00px;font-size:15.4px;color:#646a77;letter-spacing:0.822px;-webkit-text-stroke:0.2px;">09:00</span>
<span class="t" style="left:964.93px;top:1105.00px;font-size:15.4px;color:#646a77;letter-spacing:0.340px;-webkit-text-stroke:0.2px;">10:00</span>
<span class="t" style="left:1044.80px;top:1105.00px;font-size:15.4px;color:#646a77;-webkit-text-stroke:0.2px;">11:00</span>
<span class="t" style="left:1124.68px;top:1105.00px;font-size:15.4px;color:#646a77;letter-spacing:0.340px;-webkit-text-stroke:0.2px;">12:00</span>
<span class="t" style="left:1204.55px;top:1105.00px;font-size:15.4px;color:#646a77;letter-spacing:0.340px;-webkit-text-stroke:0.2px;">13:00</span>
<span class="t" style="left:1284.43px;top:1105.00px;font-size:15.4px;color:#646a77;letter-spacing:0.340px;-webkit-text-stroke:0.2px;">14:00</span>
<span class="t" style="left:1364.30px;top:1105.00px;font-size:15.4px;color:#646a77;letter-spacing:0.340px;-webkit-text-stroke:0.2px;">15:00</span>
<span class="t" style="left:1444.18px;top:1105.00px;font-size:15.4px;color:#646a77;letter-spacing:0.340px;-webkit-text-stroke:0.2px;">16:00</span>
<span class="t" style="left:1524.05px;top:1105.00px;font-size:15.4px;color:#646a77;letter-spacing:0.340px;-webkit-text-stroke:0.2px;">17:00</span>
<span class="t" style="left:1603.93px;top:1105.00px;font-size:15.4px;color:#646a77;letter-spacing:0.340px;-webkit-text-stroke:0.2px;">18:00</span>
<span class="t" style="left:1683.80px;top:1105.00px;font-size:15.4px;color:#646a77;letter-spacing:0.340px;-webkit-text-stroke:0.2px;">19:00</span>
<span class="t" style="left:1764.08px;top:1105.00px;font-size:15.4px;color:#646a77;letter-spacing:0.865px;-webkit-text-stroke:0.2px;">20:00</span>
<span class="t" style="left:1843.95px;top:1105.00px;font-size:15.4px;color:#646a77;letter-spacing:0.290px;-webkit-text-stroke:0.2px;">21:00</span>
<span class="t" style="left:1923.83px;top:1105.00px;font-size:15.4px;color:#646a77;letter-spacing:0.865px;-webkit-text-stroke:0.2px;">22:00</span>
<span class="t" style="left:2003.70px;top:1105.00px;font-size:15.4px;color:#646a77;letter-spacing:0.865px;-webkit-text-stroke:0.2px;">23:00</span>
<span class="t" style="left:166.14px;top:1120.00px;font-size:15.4px;color:#646a77;letter-spacing:0.246px;-webkit-text-stroke:0.2px;">February 14, 2024</span>
<div class="legend" style="left:2095.0px;top:930.0px;width:345.0px;height:221.5px;overflow:hidden;-webkit-mask-image:linear-gradient(to bottom,#000 0,#000 205px,transparent 224px);mask-image:linear-gradient(to bottom,#000 0,#000 205px,transparent 224px)"><div style="left:12.6px;top:27.7px;width:12.4px;height:12.4px;border-radius:50%;background:#54b399"></div><div style="left:298.6px;top:23.7px;width:5.2px;height:5.2px;border:1.3px solid #4a4e58"></div><div style="left:298.6px;top:31.3px;width:5.2px;height:5.2px;border:1.3px solid #4a4e58"></div><div style="left:298.6px;top:38.9px;width:5.2px;height:5.2px;border:1.3px solid #4a4e58"></div><div style="left:12.6px;top:63.7px;width:12.4px;height:12.4px;border-radius:50%;background:#6092c0"></div><div style="left:298.6px;top:59.7px;width:5.2px;height:5.2px;border:1.3px solid #4a4e58"></div><div style="left:298.6px;top:67.3px;width:5.2px;height:5.2px;border:1.3px solid #4a4e58"></div><div style="left:298.6px;top:74.9px;width:5.2px;height:5.2px;border:1.3px solid #4a4e58"></div><div style="left:12.6px;top:99.6px;width:12.4px;height:12.4px;border-radius:50%;background:#d36086"></div><div style="left:298.6px;top:95.6px;width:5.2px;height:5.2px;border:1.3px solid #4a4e58"></div><div style="left:298.6px;top:103.2px;width:5.2px;height:5.2px;border:1.3px solid #4a4e58"></div><div style="left:298.6px;top:110.8px;width:5.2px;height:5.2px;border:1.3px solid #4a4e58"></div><div style="left:12.6px;top:135.6px;width:12.4px;height:12.4px;border-radius:50%;background:#9170b8"></div><div style="left:298.6px;top:131.6px;width:5.2px;height:5.2px;border:1.3px solid #4a4e58"></div><div style="left:298.6px;top:139.2px;width:5.2px;height:5.2px;border:1.3px solid #4a4e58"></div><div style="left:298.6px;top:146.8px;width:5.2px;height:5.2px;border:1.3px solid #4a4e58"></div><div style="left:12.6px;top:171.6px;width:12.4px;height:12.4px;border-radius:50%;background:#ca8eae"></div><div style="left:298.6px;top:167.6px;width:5.2px;height:5.2px;border:1.3px solid #4a4e58"></div><div style="left:298.6px;top:175.2px;width:5.2px;height:5.2px;border:1.3px solid #4a4e58"></div><div style="left:298.6px;top:182.8px;width:5.2px;height:5.2px;border:1.3px solid #4a4e58"></div><div style="left:12.6px;top:207.5px;width:12.4px;height:12.4px;border-radius:50%;background:#d6bf57"></div><div style="left:298.6px;top:203.6px;width:5.2px;height:5.2px;border:1.3px solid #4a4e58"></div><div style="left:298.6px;top:211.2px;width:5.2px;height:5.2px;border:1.3px solid #4a4e58"></div><div style="left:298.6px;top:218.8px;width:5.2px;height:5.2px;border:1.3px solid #4a4e58"></div></div>
<span class="t" style="left:2131.13px;top:953.00px;font-size:23.6px;letter-spacing:0.337px;-webkit-text-stroke:0.3px;">network_flow</span>
<span class="t" style="left:2131.70px;top:989.00px;font-size:23.6px;letter-spacing:0.413px;-webkit-text-stroke:0.3px;">connection_attempted</span>
<span class="t" style="left:2131.71px;top:1025.00px;font-size:23.6px;letter-spacing:0.328px;-webkit-text-stroke:0.3px;">disconnect_received</span>
<span class="t" style="left:2131.70px;top:1061.00px;font-size:23.6px;letter-spacing:0.583px;-webkit-text-stroke:0.3px;">creation</span>
<span class="t" style="left:2130.76px;top:1097.00px;font-size:23.6px;letter-spacing:0.362px;-webkit-text-stroke:0.3px;">Error report</span>
<span class="t" style="left:2130.76px;top:1133.00px;font-size:23.6px;letter-spacing:0.062px;-webkit-text-stroke:0.3px;-webkit-mask-image:linear-gradient(to bottom,#000 0,#000 45%,transparent 80%);mask-image:linear-gradient(to bottom,#000 0,#000 45%,transparent 80%);">File Delete archived (...</span>
<div style="left:2426.4px;top:938.7px;width:5.6px;height:95.5px;background:#b2b5be;border-radius:3px"></div>
</section>
<main role="table" aria-label="Events">
<svg style="left:48px;top:1253px" width="20" height="20" viewBox="48 1253 20 20" ><g transform="translate(49,1254)"><rect x="0.8" y="0.8" width="16.4" height="16.4" rx="2" fill="none" stroke="#343741" stroke-width="1.5"/><rect x="1.5" y="2.8" width="15" height="2.2" fill="#8a8f99"/><g stroke="#343741" stroke-width="1.3" stroke-dasharray="3.1 1.3"><line x1="2.8" x2="15.6" y1="8" y2="8"/><line x1="2.8" x2="15.6" y1="11.1" y2="11.1"/><line x1="2.8" x2="15.6" y1="14.3" y2="14.3"/></g></g></svg>
<span class="t" style="left:78.82px;top:1251.00px;font-size:23.3px;letter-spacing:0.431px;-webkit-text-stroke:0.3px;">Columns</span>
<div style="left:185.3px;top:1251.2px;width:41.6px;height:23.8px;background:#e0e5ee;border-radius:6px"></div>
<span class="t" style="left:192.03px;top:1251.00px;font-size:23.3px;font-weight:500;color:#000;letter-spacing:2.963px;">10</span>
<svg style="left:256px;top:1255px" width="13" height="16" viewBox="256 1255 13 16" ><g transform="translate(257,1256)" fill="none" stroke="#343741" stroke-width="1.3" stroke-linecap="round" stroke-linejoin="round"><path d="M0.8 5.2 L5.3 0.8 L9.8 5.2 M0.8 8.6 L5.3 13 L9.8 8.6 M5.3 1.2 V12.6"/></g></svg>
<span class="t" style="left:283.24px;top:1251.00px;font-size:23.3px;letter-spacing:0.771px;-webkit-text-stroke:0.3px;">Sort fields</span>
<div style="left:407.0px;top:1251.2px;width:25.8px;height:23.8px;background:#e0e5ee;border-radius:6px"></div>
<span class="t" style="left:413.03px;top:1251.00px;font-size:23.3px;font-weight:500;color:#000;">1</span>
<span class="t" style="left:447.60px;top:1255.00px;font-size:18.6px;font-weight:700;letter-spacing:0.117px;">7,819,593 events</span>
<div style="left:614.0px;top:1255.0px;width:1.4px;height:19.5px;background:#d3dae6"></div>
<svg style="left:641px;top:1253.6px" width="20" height="19" viewBox="641 1253.6 20 19" ><g transform="translate(642,1254.6)" fill="none" stroke="#343741" stroke-width="1.4"><rect x="0.7" y="0.7" width="16.4" height="15.6" rx="0.8"/><line x1="10.3" x2="10.3" y1="0.7" y2="16.3"/><path d="M3 4.3h4.6M3 7.6h4.6M3 10.9h3.2" stroke-width="1.3"/></g></svg>
<span class="t" style="left:670.69px;top:1251.00px;font-size:23.3px;letter-spacing:0.539px;-webkit-text-stroke:0.3px;">Fields</span>
<div class="cb" style="left:2083.9px;top:1249.3px;width:22.8px;height:22.8px;"></div>
<span class="t" style="left:2119.17px;top:1251.00px;font-size:22.6px;letter-spacing:-0.066px;-webkit-text-stroke:0.3px;">Show only external alerts</span>
<svg style="left:2381px;top:1253.4px" width="27" height="20" viewBox="2381 1253.4 27 20" ><g transform="translate(2382,1254.4)"><rect x="0.8" y="1.3" width="22.8" height="15" rx="0.6" fill="none" stroke="#343741" stroke-width="1.5"/><rect x="3.0" y="4.2" width="1.4" height="1.4" fill="#343741"/><rect x="5.6" y="4.2" width="1.4" height="1.4" fill="#343741"/><rect x="8.2" y="4.2" width="1.4" height="1.4" fill="#343741"/><rect x="10.8" y="4.2" width="1.4" height="1.4" fill="#343741"/><rect x="13.4" y="4.2" width="1.4" height="1.4" fill="#343741"/><rect x="16.0" y="4.2" width="1.4" height="1.4" fill="#343741"/><rect x="18.6" y="4.2" width="1.4" height="1.4" fill="#343741"/><rect x="3.0" y="6.9" width="1.4" height="1.4" fill="#343741"/><rect x="5.6" y="6.9" width="1.4" height="1.4" fill="#343741"/><rect x="8.2" y="6.9" width="1.4" height="1.4" fill="#343741"/><rect x="10.8" y="6.9" width="1.4" height="1.4" fill="#343741"/><rect x="13.4" y="6.9" width="1.4" height="1.4" fill="#343741"/><rect x="16.0" y="6.9" width="1.4" height="1.4" fill="#343741"/><rect x="18.6" y="6.9" width="1.4" height="1.4" fill="#343741"/><rect x="3.0" y="9.6" width="1.4" height="1.4" fill="#343741"/><rect x="5.6" y="9.6" width="1.4" height="1.4" fill="#343741"/><rect x="8.2" y="9.6" width="1.4" height="1.4" fill="#343741"/><rect x="10.8" y="9.6" width="1.4" height="1.4" fill="#343741"/><rect x="13.4" y="9.6" width="1.4" height="1.4" fill="#343741"/><rect x="16.0" y="9.6" width="1.4" height="1.4" fill="#343741"/><rect x="18.6" y="9.6" width="1.4" height="1.4" fill="#343741"/><rect x="5.6" y="12.3" width="13" height="1.5" fill="#343741"/></g></svg>
<svg style="left:2428.6px;top:1249.6px" width="27" height="27" viewBox="2428.6 1249.6 27 27" ><g transform="translate(2429.6,1250.6)" fill="none" stroke="#343741" stroke-width="1.5"><rect x="0.8" y="0.8" width="22.6" height="22.6" rx="2.6"/><path d="M5.2 9.8V5.2h4.6M14.4 5.2h4.6v4.6M19 14.4v4.6h-4.6M9.8 19H5.2v-4.6" stroke-linecap="round" stroke-linejoin="round"/></g></svg>
<div class="cb" style="left:46.4px;top:1299.3px;width:22.6px;height:22.6px;"></div>
<span class="t" style="left:94.40px;top:1299.00px;font-size:24px;font-weight:700;letter-spacing:-0.539px;">Actions</span>
<span class="t" style="left:321.53px;top:1299.00px;font-size:24px;font-weight:700;letter-spacing:-0.187px;">@timestamp</span>
<span class="t" style="left:605.62px;top:1299.00px;font-size:24px;font-weight:700;letter-spacing:-0.158px;">message</span>
<span class="t" style="left:813.42px;top:1299.00px;font-size:24px;font-weight:700;letter-spacing:-0.204px;">host.name</span>
<span class="t" style="left:1021.76px;top:1299.00px;font-size:24px;font-weight:700;letter-spacing:-0.304px;">event.module</span>
<span class="t" style="left:1228.90px;top:1299.00px;font-size:24px;font-weight:700;letter-spacing:0.066px;">agent.type</span>
<span class="t" style="left:1436.56px;top:1299.00px;font-size:24px;font-weight:700;letter-spacing:-0.040px;">event.dataset</span>
<span class="t" style="left:1644.06px;top:1299.00px;font-size:24px;font-weight:700;letter-spacing:-0.056px;">event.action</span>
<span class="t" style="left:1850.91px;top:1299.00px;font-size:24px;font-weight:700;letter-spacing:-0.191px;">user.name</span>
<span class="t" style="left:2058.96px;top:1299.00px;font-size:24px;font-weight:700;letter-spacing:-0.384px;">source.ip</span>
<span class="t" style="left:2266.52px;top:1299.00px;font-size:24px;font-weight:700;letter-spacing:-0.225px;">destination.ip</span>
<svg style="left:470px;top:1302px" width="20" height="19" viewBox="470 1302 20 19" ><path d="M480.3 1304.3 V1317.4 M473.3 1311 L480.3 1318 L487.3 1311" fill="none" stroke="#343741" stroke-width="1.8" stroke-linecap="round" stroke-linejoin="round"/></svg>
<div style="left:37.0px;top:1335.0px;width:2429.0px;height:3.0px;background:#343741"></div>
<section role="row">
<div class="cb" style="left:47.1px;top:1350.2px;width:22.6px;height:22.6px;"></div>
<svg style="left:0;top:1347.5px" width="270" height="28" viewBox="0 1347.5 270 28"><g transform="translate(107.6,1350.9)" fill="none" stroke="#0b64b0" stroke-width="1.7" stroke-linecap="round" stroke-linejoin="round"><path d="M14.2 1 H19 Q20.4 1 20.4 2.4 V7.4 M17.3 4.2 L4.2 17.3 M1 14.4 V19.4 Q1 20.8 2.4 20.8 H7.2"/></g><g transform="translate(148.1,1349.5)" fill="none" stroke="#0b64b0" stroke-width="1.65" stroke-linejoin="round"><rect x="7.7" y="0.9" width="7" height="5" rx="1.3"/><path d="M11.2 5.9v1.5M3.9 16.9v-2M18.4 16.9v-2M0.5 11.3H21.6" /><rect x="0.9" y="16.9" width="6.2" height="4.7" rx="1.2"/><rect x="15.3" y="16.9" width="6.2" height="4.7" rx="1.2"/><circle cx="3.6" cy="11.3" r="1.35" fill="#fff"/><circle cx="11.2" cy="11.3" r="1.35" fill="#fff"/><path d="M18 9.7 L21 11.3 L18 12.9 Z" fill="#fff" stroke-width="1.3"/></g><g transform="translate(190.0,1358.4)" fill="none" stroke="#98a2b3" stroke-width="1.7"><rect x="0.9" y="0.9" width="4.4" height="4.4"/><rect x="9.8" y="0.9" width="4.4" height="4.4"/><rect x="18.7" y="0.9" width="4.4" height="4.4"/></g></svg>
<span class="t" style="left:321.41px;top:1353.00px;font-size:23px;letter-spacing:0.707px;-webkit-text-stroke:0.3px;">Feb 14, 2024 @ 15:17...</span>
<span class="t" style="left:607.20px;top:1349.00px;font-size:23px;-webkit-text-stroke:0.5px #343741;">—</span>
<svg style="left:814.8px;top:1351.9px" width="168.0" height="21.0" viewBox="0 0 24 3" preserveAspectRatio="none" shape-rendering="crispEdges"><path fill="#4a8fcc" d="M23 0h1v1h-1zM23 1h1v1h-1zM20 2h1v1h-1z"/><path fill="#0b64b8" d="M0 1h1v1h-1zM13 1h1v1h-1zM21 1h1v1h-1zM0 2h1v1h-1zM2 2h1v1h-1zM4 2h1v1h-1zM11 2h1v1h-1zM19 2h1v1h-1zM23 2h1v1h-1z"/><path fill="#86b6de" d="M2 1h1v1h-1zM7 1h1v1h-1zM20 1h1v1h-1zM6 2h1v1h-1zM7 2h1v1h-1z"/><path fill="#ecf3fa" d="M5 1h1v1h-1zM6 1h1v1h-1z"/><path fill="#bfd8ee" d="M12 1h1v1h-1zM17 1h1v1h-1zM18 2h1v1h-1z"/></svg>
<span class="t" style="left:1022.06px;top:1351.00px;font-size:23px;letter-spacing:0.943px;-webkit-text-stroke:0.3px;">system</span>
<span class="t" style="left:1228.62px;top:1351.00px;font-size:23px;letter-spacing:0.876px;-webkit-text-stroke:0.3px;">auditbeat</span>
<span class="t" style="left:1436.86px;top:1351.00px;font-size:23px;letter-spacing:0.865px;-webkit-text-stroke:0.3px;">socket</span>
<span class="t" style="left:1643.47px;top:1351.00px;font-size:23px;letter-spacing:0.649px;-webkit-text-stroke:0.3px;">network_flow</span>
<span class="t" style="left:1850.87px;top:1351.00px;font-size:23px;color:#0b69b4;letter-spacing:1.518px;-webkit-text-stroke:0.3px;">root</span>
<svg style="left:2061.0px;top:1351.9px" width="133.0" height="21.0" viewBox="0 0 19 3" preserveAspectRatio="none" shape-rendering="crispEdges"><path fill="#0b64b8" d="M0 0h1v1h-1zM2 0h1v1h-1zM3 0h1v1h-1zM5 0h1v1h-1zM6 0h1v1h-1zM8 0h1v1h-1zM10 0h1v1h-1zM13 0h1v1h-1zM3 1h1v1h-1zM7 1h1v1h-1zM10 1h1v1h-1zM12 1h1v1h-1zM16 1h1v1h-1zM18 1h1v1h-1zM4 2h1v1h-1zM5 2h1v1h-1zM6 2h1v1h-1zM10 2h1v1h-1zM13 2h1v1h-1zM18 2h1v1h-1z"/><path fill="#4a8fcc" d="M7 0h1v1h-1zM16 0h1v1h-1zM18 0h1v1h-1z"/><path fill="#86b6de" d="M15 0h1v1h-1zM2 1h1v1h-1zM8 2h1v1h-1z"/><path fill="#bfd8ee" d="M6 1h1v1h-1zM2 2h1v1h-1z"/><path fill="#ecf3fa" d="M11 2h1v1h-1z"/></svg>
<svg style="left:2271.2px;top:1351.9px" width="119.0" height="21.0" viewBox="0 0 17 3" preserveAspectRatio="none" shape-rendering="crispEdges"><path fill="#0b64b8" d="M0 0h1v1h-1zM7 0h1v1h-1zM12 0h1v1h-1zM13 0h1v1h-1zM15 0h1v1h-1zM16 0h1v1h-1zM8 1h1v1h-1zM13 1h1v1h-1zM2 2h1v1h-1zM5 2h1v1h-1zM7 2h1v1h-1zM14 2h1v1h-1zM15 2h1v1h-1zM16 2h1v1h-1z"/><path fill="#4a8fcc" d="M2 0h1v1h-1zM5 0h1v1h-1zM9 0h1v1h-1zM0 1h1v1h-1zM0 2h1v1h-1zM11 2h1v1h-1z"/><path fill="#bfd8ee" d="M3 1h1v1h-1z"/><path fill="#ecf3fa" d="M5 1h1v1h-1zM12 1h1v1h-1z"/><path fill="#86b6de" d="M12 2h1v1h-1z"/></svg>
</section>
<section role="row">
<div class="cb" style="left:47.1px;top:1398.2px;width:22.6px;height:22.6px;"></div>
<svg style="left:0;top:1395.5px" width="270" height="28" viewBox="0 1395.5 270 28"><g transform="translate(107.6,1398.9)" fill="none" stroke="#0b64b0" stroke-width="1.7" stroke-linecap="round" stroke-linejoin="round"><path d="M14.2 1 H19 Q20.4 1 20.4 2.4 V7.4 M17.3 4.2 L4.2 17.3 M1 14.4 V19.4 Q1 20.8 2.4 20.8 H7.2"/></g><g transform="translate(148.1,1397.5)" fill="none" stroke="#0b64b0" stroke-width="1.65" stroke-linejoin="round"><rect x="7.7" y="0.9" width="7" height="5" rx="1.3"/><path d="M11.2 5.9v1.5M3.9 16.9v-2M18.4 16.9v-2M0.5 11.3H21.6" /><rect x="0.9" y="16.9" width="6.2" height="4.7" rx="1.2"/><rect x="15.3" y="16.9" width="6.2" height="4.7" rx="1.2"/><circle cx="3.6" cy="11.3" r="1.35" fill="#fff"/><circle cx="11.2" cy="11.3" r="1.35" fill="#fff"/><path d="M18 9.7 L21 11.3 L18 12.9 Z" fill="#fff" stroke-width="1.3"/></g><g transform="translate(190.0,1406.4)" fill="none" stroke="#98a2b3" stroke-width="1.7"><rect x="0.9" y="0.9" width="4.4" height="4.4"/><rect x="9.8" y="0.9" width="4.4" height="4.4"/><rect x="18.7" y="0.9" width="4.4" height="4.4"/></g></svg>
<span class="t" style="left:321.41px;top:1401.00px;font-size:23px;letter-spacing:0.707px;-webkit-text-stroke:0.3px;">Feb 14, 2024 @ 15:17...</span>
<span class="t" style="left:607.20px;top:1397.00px;font-size:23px;-webkit-text-stroke:0.5px #343741;">—</span>
<svg style="left:814.8px;top:1407.8px" width="168.0" height="14.0" viewBox="0 0 24 2" preserveAspectRatio="none" shape-rendering="crispEdges"><path fill="#0b64b8" d="M0 0h1v1h-1zM2 0h1v1h-1zM13 0h1v1h-1zM21 0h1v1h-1zM23 0h1v1h-1zM11 1h1v1h-1z"/><path fill="#ecf3fa" d="M5 0h1v1h-1zM11 0h1v1h-1zM20 0h1v1h-1zM0 1h1v1h-1zM2 1h1v1h-1z"/><path fill="#86b6de" d="M7 0h1v1h-1z"/><path fill="#bfd8ee" d="M12 0h1v1h-1zM17 0h1v1h-1zM4 1h1v1h-1z"/></svg>
<span class="t" style="left:1022.06px;top:1399.00px;font-size:23px;letter-spacing:0.943px;-webkit-text-stroke:0.3px;">system</span>
<span class="t" style="left:1228.62px;top:1399.00px;font-size:23px;letter-spacing:0.876px;-webkit-text-stroke:0.3px;">auditbeat</span>
<span class="t" style="left:1436.86px;top:1399.00px;font-size:23px;letter-spacing:0.865px;-webkit-text-stroke:0.3px;">socket</span>
<span class="t" style="left:1643.47px;top:1399.00px;font-size:23px;letter-spacing:0.649px;-webkit-text-stroke:0.3px;">network_flow</span>
<span class="t" style="left:1850.87px;top:1399.00px;font-size:23px;color:#0b69b4;letter-spacing:1.518px;-webkit-text-stroke:0.3px;">root</span>
<svg style="left:2061.0px;top:1401.2px" width="133.0" height="21.0" viewBox="0 0 19 3" preserveAspectRatio="none" shape-rendering="crispEdges"><path fill="#0b64b8" d="M0 0h1v1h-1zM2 0h1v1h-1zM3 0h1v1h-1zM5 0h1v1h-1zM6 0h1v1h-1zM7 0h1v1h-1zM8 0h1v1h-1zM10 0h1v1h-1zM3 1h1v1h-1zM7 1h1v1h-1zM10 1h1v1h-1zM12 1h1v1h-1zM18 1h1v1h-1z"/><path fill="#bfd8ee" d="M12 0h1v1h-1zM13 0h1v1h-1z"/><path fill="#ecf3fa" d="M16 0h1v1h-1zM8 1h1v1h-1zM4 2h1v1h-1zM13 2h1v1h-1zM18 2h1v1h-1z"/><path fill="#86b6de" d="M2 1h1v1h-1zM16 1h1v1h-1z"/></svg>
<svg style="left:2271.2px;top:1401.2px" width="147.0" height="21.0" viewBox="0 0 21 3" preserveAspectRatio="none" shape-rendering="crispEdges"><path fill="#0b64b8" d="M2 0h1v1h-1zM10 0h1v1h-1zM12 0h1v1h-1zM13 0h1v1h-1zM15 0h1v1h-1zM16 0h1v1h-1zM17 0h1v1h-1zM18 0h1v1h-1zM5 1h1v1h-1zM8 1h1v1h-1zM13 1h1v1h-1zM18 1h1v1h-1z"/><path fill="#bfd8ee" d="M7 0h1v1h-1zM8 0h1v1h-1zM0 2h1v1h-1z"/><path fill="#86b6de" d="M19 0h1v1h-1z"/><path fill="#4a8fcc" d="M12 1h1v1h-1z"/><path fill="#ecf3fa" d="M20 1h1v1h-1zM14 2h1v1h-1z"/></svg>
</section>
<section role="row">
<div class="cb" style="left:47.1px;top:1446.2px;width:22.6px;height:22.6px;"></div>
<svg style="left:0;top:1443.5px" width="270" height="28" viewBox="0 1443.5 270 28"><g transform="translate(107.6,1446.9)" fill="none" stroke="#0b64b0" stroke-width="1.7" stroke-linecap="round" stroke-linejoin="round"><path d="M14.2 1 H19 Q20.4 1 20.4 2.4 V7.4 M17.3 4.2 L4.2 17.3 M1 14.4 V19.4 Q1 20.8 2.4 20.8 H7.2"/></g><g transform="translate(148.1,1445.5)" fill="none" stroke="#0b64b0" stroke-width="1.65" stroke-linejoin="round"><rect x="7.7" y="0.9" width="7" height="5" rx="1.3"/><path d="M11.2 5.9v1.5M3.9 16.9v-2M18.4 16.9v-2M0.5 11.3H21.6" /><rect x="0.9" y="16.9" width="6.2" height="4.7" rx="1.2"/><rect x="15.3" y="16.9" width="6.2" height="4.7" rx="1.2"/><circle cx="3.6" cy="11.3" r="1.35" fill="#fff"/><circle cx="11.2" cy="11.3" r="1.35" fill="#fff"/><path d="M18 9.7 L21 11.3 L18 12.9 Z" fill="#fff" stroke-width="1.3"/></g><g transform="translate(190.0,1454.4)" fill="none" stroke="#98a2b3" stroke-width="1.7"><rect x="0.9" y="0.9" width="4.4" height="4.4"/><rect x="9.8" y="0.9" width="4.4" height="4.4"/><rect x="18.7" y="0.9" width="4.4" height="4.4"/></g></svg>
<span class="t" style="left:321.41px;top:1449.00px;font-size:23px;letter-spacing:0.707px;-webkit-text-stroke:0.3px;">Feb 14, 2024 @ 15:17...</span>
<span class="t" style="left:607.20px;top:1445.00px;font-size:23px;-webkit-text-stroke:0.5px #343741;">—</span>
<svg style="left:814.8px;top:1449.9px" width="168.0" height="21.0" viewBox="0 0 24 3" preserveAspectRatio="none" shape-rendering="crispEdges"><path fill="#bfd8ee" d="M0 0h1v1h-1zM7 0h1v1h-1zM8 0h1v1h-1zM20 0h1v1h-1zM17 1h1v1h-1z"/><path fill="#4a8fcc" d="M2 0h1v1h-1zM4 0h1v1h-1zM16 0h1v1h-1zM2 1h1v1h-1zM11 2h1v1h-1z"/><path fill="#86b6de" d="M9 0h1v1h-1zM19 0h1v1h-1zM0 1h1v1h-1zM7 1h1v1h-1zM11 1h1v1h-1z"/><path fill="#ecf3fa" d="M17 0h1v1h-1zM1 1h1v1h-1zM5 1h1v1h-1zM12 1h1v1h-1zM13 1h1v1h-1zM20 1h1v1h-1zM21 1h1v1h-1z"/><path fill="#0b64b8" d="M23 1h1v1h-1z"/></svg>
<span class="t" style="left:1022.06px;top:1447.00px;font-size:23px;letter-spacing:0.943px;-webkit-text-stroke:0.3px;">system</span>
<span class="t" style="left:1228.62px;top:1447.00px;font-size:23px;letter-spacing:0.876px;-webkit-text-stroke:0.3px;">auditbeat</span>
<span class="t" style="left:1436.86px;top:1447.00px;font-size:23px;letter-spacing:0.865px;-webkit-text-stroke:0.3px;">socket</span>
<span class="t" style="left:1643.47px;top:1447.00px;font-size:23px;letter-spacing:0.649px;-webkit-text-stroke:0.3px;">network_flow</span>
<span class="t" style="left:1850.87px;top:1447.00px;font-size:23px;color:#0b69b4;letter-spacing:1.518px;-webkit-text-stroke:0.3px;">root</span>
<svg style="left:2061.0px;top:1449.9px" width="133.0" height="14.0" viewBox="0 0 19 2" preserveAspectRatio="none" shape-rendering="crispEdges"><path fill="#4a8fcc" d="M0 0h1v1h-1zM8 0h1v1h-1zM12 0h1v1h-1z"/><path fill="#0b64b8" d="M2 0h1v1h-1zM3 0h1v1h-1zM5 0h1v1h-1zM6 0h1v1h-1zM7 0h1v1h-1zM10 0h1v1h-1zM3 1h1v1h-1zM7 1h1v1h-1zM10 1h1v1h-1zM12 1h1v1h-1z"/><path fill="#86b6de" d="M16 0h1v1h-1zM2 1h1v1h-1z"/><path fill="#bfd8ee" d="M8 1h1v1h-1z"/><path fill="#ecf3fa" d="M16 1h1v1h-1zM18 1h1v1h-1z"/></svg>
<svg style="left:2271.2px;top:1449.9px" width="119.0" height="14.0" viewBox="0 0 17 2" preserveAspectRatio="none" shape-rendering="crispEdges"><path fill="#4a8fcc" d="M0 0h1v1h-1zM8 0h1v1h-1zM15 0h1v1h-1zM0 1h1v1h-1z"/><path fill="#0b64b8" d="M9 0h1v1h-1zM12 0h1v1h-1zM13 0h1v1h-1zM16 0h1v1h-1zM5 1h1v1h-1zM8 1h1v1h-1zM13 1h1v1h-1z"/><path fill="#ecf3fa" d="M3 1h1v1h-1zM15 1h1v1h-1z"/><path fill="#bfd8ee" d="M12 1h1v1h-1z"/></svg>
</section>
<section role="row">
<div class="cb" style="left:47.1px;top:1494.2px;width:22.6px;height:22.6px;"></div>
<svg style="left:0;top:1491.5px" width="270" height="28" viewBox="0 1491.5 270 28"><g transform="translate(107.6,1494.9)" fill="none" stroke="#0b64b0" stroke-width="1.7" stroke-linecap="round" stroke-linejoin="round"><path d="M14.2 1 H19 Q20.4 1 20.4 2.4 V7.4 M17.3 4.2 L4.2 17.3 M1 14.4 V19.4 Q1 20.8 2.4 20.8 H7.2"/></g><g transform="translate(148.1,1493.5)" fill="none" stroke="#0b64b0" stroke-width="1.65" stroke-linejoin="round"><rect x="7.7" y="0.9" width="7" height="5" rx="1.3"/><path d="M11.2 5.9v1.5M3.9 16.9v-2M18.4 16.9v-2M0.5 11.3H21.6" /><rect x="0.9" y="16.9" width="6.2" height="4.7" rx="1.2"/><rect x="15.3" y="16.9" width="6.2" height="4.7" rx="1.2"/><circle cx="3.6" cy="11.3" r="1.35" fill="#fff"/><circle cx="11.2" cy="11.3" r="1.35" fill="#fff"/><path d="M18 9.7 L21 11.3 L18 12.9 Z" fill="#fff" stroke-width="1.3"/></g><g transform="translate(190.0,1502.4)" fill="none" stroke="#98a2b3" stroke-width="1.7"><rect x="0.9" y="0.9" width="4.4" height="4.4"/><rect x="9.8" y="0.9" width="4.4" height="4.4"/><rect x="18.7" y="0.9" width="4.4" height="4.4"/></g></svg>
<span class="t" style="left:321.41px;top:1497.00px;font-size:23px;letter-spacing:0.707px;-webkit-text-stroke:0.3px;">Feb 14, 2024 @ 15:17...</span>
<span class="t" style="left:607.20px;top:1493.00px;font-size:23px;-webkit-text-stroke:0.5px #343741;">—</span>
<svg style="left:814.8px;top:1498.7px" width="168.0" height="21.0" viewBox="0 0 24 3" preserveAspectRatio="none" shape-rendering="crispEdges"><path fill="#0b64b8" d="M0 0h1v1h-1zM2 0h1v1h-1zM4 0h1v1h-1zM9 0h1v1h-1zM16 0h1v1h-1zM19 0h1v1h-1zM20 0h1v1h-1z"/><path fill="#86b6de" d="M7 0h1v1h-1zM1 1h1v1h-1zM7 1h1v1h-1z"/><path fill="#bfd8ee" d="M8 0h1v1h-1zM17 0h1v1h-1zM17 1h1v1h-1z"/><path fill="#4a8fcc" d="M23 0h1v1h-1zM11 1h1v1h-1zM20 1h1v1h-1zM23 1h1v1h-1z"/><path fill="#ecf3fa" d="M5 1h1v1h-1zM11 2h1v1h-1z"/></svg>
<span class="t" style="left:1022.06px;top:1495.00px;font-size:23px;letter-spacing:0.943px;-webkit-text-stroke:0.3px;">system</span>
<span class="t" style="left:1228.62px;top:1495.00px;font-size:23px;letter-spacing:0.876px;-webkit-text-stroke:0.3px;">auditbeat</span>
<span class="t" style="left:1436.86px;top:1495.00px;font-size:23px;letter-spacing:0.865px;-webkit-text-stroke:0.3px;">socket</span>
<span class="t" style="left:1643.47px;top:1495.00px;font-size:23px;letter-spacing:0.649px;-webkit-text-stroke:0.3px;">network_flow</span>
<span class="t" style="left:1850.87px;top:1495.00px;font-size:23px;color:#0b69b4;letter-spacing:1.518px;-webkit-text-stroke:0.3px;">root</span>
<svg style="left:2061.0px;top:1498.7px" width="126.0" height="14.0" viewBox="0 0 18 2" preserveAspectRatio="none" shape-rendering="crispEdges"><path fill="#4a8fcc" d="M2 0h1v1h-1zM12 1h1v1h-1z"/><path fill="#0b64b8" d="M3 0h1v1h-1zM6 0h1v1h-1zM7 0h1v1h-1zM10 0h1v1h-1zM12 0h1v1h-1zM16 0h1v1h-1zM2 1h1v1h-1zM3 1h1v1h-1zM7 1h1v1h-1zM10 1h1v1h-1zM16 1h1v1h-1z"/><path fill="#86b6de" d="M5 0h1v1h-1zM8 0h1v1h-1zM8 1h1v1h-1z"/><path fill="#ecf3fa" d="M17 0h1v1h-1z"/><path fill="#bfd8ee" d="M5 1h1v1h-1z"/></svg>
<svg style="left:2271.2px;top:1498.7px" width="119.0" height="14.0" viewBox="0 0 17 2" preserveAspectRatio="none" shape-rendering="crispEdges"><path fill="#4a8fcc" d="M0 0h1v1h-1zM0 1h1v1h-1zM8 1h1v1h-1zM12 1h1v1h-1zM15 1h1v1h-1z"/><path fill="#0b64b8" d="M8 0h1v1h-1zM13 0h1v1h-1zM16 0h1v1h-1zM5 1h1v1h-1zM13 1h1v1h-1z"/><path fill="#ecf3fa" d="M9 0h1v1h-1z"/><path fill="#86b6de" d="M12 0h1v1h-1zM15 0h1v1h-1z"/></svg>
</section>
<section role="row">
<div class="cb" style="left:47.1px;top:1542.2px;width:22.6px;height:22.6px;"></div>
<svg style="left:0;top:1539.5px" width="270" height="28" viewBox="0 1539.5 270 28"><g transform="translate(107.6,1542.9)" fill="none" stroke="#0b64b0" stroke-width="1.7" stroke-linecap="round" stroke-linejoin="round"><path d="M14.2 1 H19 Q20.4 1 20.4 2.4 V7.4 M17.3 4.2 L4.2 17.3 M1 14.4 V19.4 Q1 20.8 2.4 20.8 H7.2"/></g><g transform="translate(148.1,1541.5)" fill="none" stroke="#0b64b0" stroke-width="1.65" stroke-linejoin="round"><rect x="7.7" y="0.9" width="7" height="5" rx="1.3"/><path d="M11.2 5.9v1.5M3.9 16.9v-2M18.4 16.9v-2M0.5 11.3H21.6" /><rect x="0.9" y="16.9" width="6.2" height="4.7" rx="1.2"/><rect x="15.3" y="16.9" width="6.2" height="4.7" rx="1.2"/><circle cx="3.6" cy="11.3" r="1.35" fill="#fff"/><circle cx="11.2" cy="11.3" r="1.35" fill="#fff"/><path d="M18 9.7 L21 11.3 L18 12.9 Z" fill="#fff" stroke-width="1.3"/></g><g transform="translate(190.0,1550.4)" fill="none" stroke="#0b64b0" stroke-width="1.7"><rect x="0.9" y="0.9" width="4.4" height="4.4"/><rect x="9.8" y="0.9" width="4.4" height="4.4"/><rect x="18.7" y="0.9" width="4.4" height="4.4"/></g><g transform="translate(233.3,1541.6)" fill="none" stroke="#0b64b0" stroke-width="1.8" stroke-linejoin="round"><path d="M10.65 0.9 L20.6 6.6 V17.6 L10.65 23.3 L0.7 17.6 V6.6 Z M0.9 6.8 L10.65 12.6 L20.4 6.8"/></g></svg>
<span class="t" style="left:321.41px;top:1545.00px;font-size:23px;letter-spacing:0.707px;-webkit-text-stroke:0.3px;">Feb 14, 2024 @ 15:17...</span>
<span class="t" style="left:605.31px;top:1543.00px;font-size:23px;letter-spacing:0.622px;-webkit-text-stroke:0.3px;">Endpoint netwo...</span>
<svg style="left:814.8px;top:1547.8px" width="168.0" height="14.0" viewBox="0 0 24 2" preserveAspectRatio="none" shape-rendering="crispEdges"><path fill="#0b64b8" d="M0 0h1v1h-1zM16 0h1v1h-1zM20 0h1v1h-1zM11 1h1v1h-1zM20 1h1v1h-1z"/><path fill="#4a8fcc" d="M2 0h1v1h-1zM4 0h1v1h-1zM9 0h1v1h-1zM23 0h1v1h-1zM1 1h1v1h-1zM23 1h1v1h-1z"/><path fill="#86b6de" d="M7 0h1v1h-1zM19 0h1v1h-1zM7 1h1v1h-1z"/><path fill="#bfd8ee" d="M8 0h1v1h-1zM17 0h1v1h-1zM0 1h1v1h-1z"/><path fill="#ecf3fa" d="M6 1h1v1h-1zM17 1h1v1h-1zM18 1h1v1h-1z"/></svg>
<span class="t" style="left:1021.72px;top:1543.00px;font-size:23px;letter-spacing:0.871px;-webkit-text-stroke:0.3px;">endpoint</span>
<span class="t" style="left:1228.62px;top:1543.00px;font-size:23px;letter-spacing:0.871px;-webkit-text-stroke:0.3px;">endpoint</span>
<span class="t" style="left:1436.52px;top:1543.00px;font-size:23px;letter-spacing:0.600px;-webkit-text-stroke:0.3px;">endpoint.event...</span>
<span class="t" style="left:1644.02px;top:1543.00px;font-size:23px;letter-spacing:0.543px;-webkit-text-stroke:0.3px;">connection_att...</span>
<span class="t" style="left:1850.87px;top:1543.00px;font-size:23px;color:#0b69b4;letter-spacing:1.518px;-webkit-text-stroke:0.3px;">root</span>
<svg style="left:2061.0px;top:1547.8px" width="119.0" height="14.0" viewBox="0 0 17 2" preserveAspectRatio="none" shape-rendering="crispEdges"><path fill="#86b6de" d="M2 0h1v1h-1zM12 1h1v1h-1z"/><path fill="#0b64b8" d="M3 0h1v1h-1zM6 0h1v1h-1zM7 0h1v1h-1zM10 0h1v1h-1zM12 0h1v1h-1zM16 0h1v1h-1zM2 1h1v1h-1zM3 1h1v1h-1zM5 1h1v1h-1zM7 1h1v1h-1zM8 1h1v1h-1zM10 1h1v1h-1zM16 1h1v1h-1z"/><path fill="#ecf3fa" d="M8 0h1v1h-1zM13 1h1v1h-1z"/><path fill="#bfd8ee" d="M4 1h1v1h-1z"/></svg>
<svg style="left:2271.2px;top:1547.8px" width="133.0" height="14.0" viewBox="0 0 19 2" preserveAspectRatio="none" shape-rendering="crispEdges"><path fill="#4a8fcc" d="M0 0h1v1h-1zM0 1h1v1h-1zM5 1h1v1h-1zM15 1h1v1h-1z"/><path fill="#ecf3fa" d="M3 0h1v1h-1zM7 1h1v1h-1zM11 1h1v1h-1z"/><path fill="#0b64b8" d="M8 0h1v1h-1zM13 0h1v1h-1zM16 0h1v1h-1zM17 0h1v1h-1zM12 1h1v1h-1zM13 1h1v1h-1zM16 1h1v1h-1zM17 1h1v1h-1zM18 1h1v1h-1z"/><path fill="#bfd8ee" d="M12 0h1v1h-1zM14 1h1v1h-1z"/><path fill="#86b6de" d="M15 0h1v1h-1zM18 0h1v1h-1zM8 1h1v1h-1z"/></svg>
</section>
<section role="row">
<div class="cb" style="left:47.1px;top:1590.2px;width:22.6px;height:22.6px;"></div>
<svg style="left:0;top:1587.5px" width="270" height="28" viewBox="0 1587.5 270 28"><g transform="translate(107.6,1590.9)" fill="none" stroke="#0b64b0" stroke-width="1.7" stroke-linecap="round" stroke-linejoin="round"><path d="M14.2 1 H19 Q20.4 1 20.4 2.4 V7.4 M17.3 4.2 L4.2 17.3 M1 14.4 V19.4 Q1 20.8 2.4 20.8 H7.2"/></g><g transform="translate(148.1,1589.5)" fill="none" stroke="#0b64b0" stroke-width="1.65" stroke-linejoin="round"><rect x="7.7" y="0.9" width="7" height="5" rx="1.3"/><path d="M11.2 5.9v1.5M3.9 16.9v-2M18.4 16.9v-2M0.5 11.3H21.6" /><rect x="0.9" y="16.9" width="6.2" height="4.7" rx="1.2"/><rect x="15.3" y="16.9" width="6.2" height="4.7" rx="1.2"/><circle cx="3.6" cy="11.3" r="1.35" fill="#fff"/><circle cx="11.2" cy="11.3" r="1.35" fill="#fff"/><path d="M18 9.7 L21 11.3 L18 12.9 Z" fill="#fff" stroke-width="1.3"/></g><g transform="translate(190.0,1598.4)" fill="none" stroke="#98a2b3" stroke-width="1.7"><rect x="0.9" y="0.9" width="4.4" height="4.4"/><rect x="9.8" y="0.9" width="4.4" height="4.4"/><rect x="18.7" y="0.9" width="4.4" height="4.4"/></g></svg>
<span class="t" style="left:321.41px;top:1593.00px;font-size:23px;letter-spacing:0.707px;-webkit-text-stroke:0.3px;">Feb 14, 2024 @ 15:17...</span>
<span class="t" style="left:607.20px;top:1589.00px;font-size:23px;-webkit-text-stroke:0.5px #343741;">—</span>
<svg style="left:814.8px;top:1590.1px" width="168.0" height="21.0" viewBox="0 0 24 3" preserveAspectRatio="none" shape-rendering="crispEdges"><path fill="#4a8fcc" d="M23 0h1v1h-1zM0 1h1v1h-1zM0 2h1v1h-1zM6 2h1v1h-1z"/><path fill="#bfd8ee" d="M1 1h1v1h-1zM17 1h1v1h-1z"/><path fill="#ecf3fa" d="M5 1h1v1h-1zM16 1h1v1h-1zM2 2h1v1h-1zM4 2h1v1h-1zM19 2h1v1h-1z"/><path fill="#86b6de" d="M7 1h1v1h-1zM1 2h1v1h-1zM7 2h1v1h-1zM23 2h1v1h-1z"/><path fill="#0b64b8" d="M20 1h1v1h-1zM11 2h1v1h-1zM18 2h1v1h-1zM20 2h1v1h-1z"/></svg>
<span class="t" style="left:1022.06px;top:1591.00px;font-size:23px;letter-spacing:0.943px;-webkit-text-stroke:0.3px;">system</span>
<span class="t" style="left:1228.62px;top:1591.00px;font-size:23px;letter-spacing:0.876px;-webkit-text-stroke:0.3px;">auditbeat</span>
<span class="t" style="left:1436.86px;top:1591.00px;font-size:23px;letter-spacing:0.865px;-webkit-text-stroke:0.3px;">socket</span>
<span class="t" style="left:1643.47px;top:1591.00px;font-size:23px;letter-spacing:0.649px;-webkit-text-stroke:0.3px;">network_flow</span>
<span class="t" style="left:1850.87px;top:1591.00px;font-size:23px;color:#0b69b4;letter-spacing:1.518px;-webkit-text-stroke:0.3px;">root</span>
<svg style="left:2061.0px;top:1590.1px" width="133.0" height="21.0" viewBox="0 0 19 3" preserveAspectRatio="none" shape-rendering="crispEdges"><path fill="#ecf3fa" d="M2 0h1v1h-1zM5 0h1v1h-1zM14 2h1v1h-1z"/><path fill="#bfd8ee" d="M8 0h1v1h-1zM8 1h1v1h-1zM11 2h1v1h-1z"/><path fill="#4a8fcc" d="M10 0h1v1h-1zM16 0h1v1h-1zM18 0h1v1h-1zM13 2h1v1h-1z"/><path fill="#86b6de" d="M13 0h1v1h-1zM15 0h1v1h-1zM2 1h1v1h-1zM6 1h1v1h-1zM6 2h1v1h-1zM18 2h1v1h-1z"/><path fill="#0b64b8" d="M3 1h1v1h-1zM7 1h1v1h-1zM10 1h1v1h-1zM12 1h1v1h-1zM16 1h1v1h-1zM2 2h1v1h-1zM3 2h1v1h-1zM4 2h1v1h-1zM5 2h1v1h-1zM7 2h1v1h-1zM8 2h1v1h-1zM10 2h1v1h-1z"/></svg>
<svg style="left:2271.2px;top:1590.1px" width="147.0" height="21.0" viewBox="0 0 21 3" preserveAspectRatio="none" shape-rendering="crispEdges"><path fill="#0b64b8" d="M0 0h1v1h-1zM8 1h1v1h-1zM12 1h1v1h-1zM16 1h1v1h-1zM18 1h1v1h-1zM19 1h1v1h-1zM20 1h1v1h-1zM5 2h1v1h-1zM12 2h1v1h-1zM13 2h1v1h-1zM14 2h1v1h-1zM15 2h1v1h-1zM17 2h1v1h-1zM18 2h1v1h-1zM20 2h1v1h-1z"/><path fill="#4a8fcc" d="M5 0h1v1h-1zM20 0h1v1h-1zM0 1h1v1h-1zM7 2h1v1h-1zM19 2h1v1h-1z"/><path fill="#86b6de" d="M7 0h1v1h-1zM13 1h1v1h-1zM16 2h1v1h-1z"/><path fill="#bfd8ee" d="M12 0h1v1h-1zM15 0h1v1h-1zM2 1h1v1h-1zM0 2h1v1h-1zM9 2h1v1h-1z"/><path fill="#ecf3fa" d="M18 0h1v1h-1zM19 0h1v1h-1z"/></svg>
</section>
<section role="row">
<div class="cb" style="left:47.1px;top:1638.2px;width:22.6px;height:22.6px;"></div>
<svg style="left:0;top:1635.5px" width="270" height="28" viewBox="0 1635.5 270 28"><g transform="translate(107.6,1638.9)" fill="none" stroke="#0b64b0" stroke-width="1.7" stroke-linecap="round" stroke-linejoin="round"><path d="M14.2 1 H19 Q20.4 1 20.4 2.4 V7.4 M17.3 4.2 L4.2 17.3 M1 14.4 V19.4 Q1 20.8 2.4 20.8 H7.2"/></g><g transform="translate(148.1,1637.5)" fill="none" stroke="#0b64b0" stroke-width="1.65" stroke-linejoin="round"><rect x="7.7" y="0.9" width="7" height="5" rx="1.3"/><path d="M11.2 5.9v1.5M3.9 16.9v-2M18.4 16.9v-2M0.5 11.3H21.6" /><rect x="0.9" y="16.9" width="6.2" height="4.7" rx="1.2"/><rect x="15.3" y="16.9" width="6.2" height="4.7" rx="1.2"/><circle cx="3.6" cy="11.3" r="1.35" fill="#fff"/><circle cx="11.2" cy="11.3" r="1.35" fill="#fff"/><path d="M18 9.7 L21 11.3 L18 12.9 Z" fill="#fff" stroke-width="1.3"/></g><g transform="translate(190.0,1646.4)" fill="none" stroke="#98a2b3" stroke-width="1.7"><rect x="0.9" y="0.9" width="4.4" height="4.4"/><rect x="9.8" y="0.9" width="4.4" height="4.4"/><rect x="18.7" y="0.9" width="4.4" height="4.4"/></g></svg>
<span class="t" style="left:321.41px;top:1641.00px;font-size:23px;letter-spacing:0.707px;-webkit-text-stroke:0.3px;">Feb 14, 2024 @ 15:17...</span>
<span class="t" style="left:607.20px;top:1637.00px;font-size:23px;-webkit-text-stroke:0.5px #343741;">—</span>
<svg style="left:814.8px;top:1639.0px" width="147.0" height="21.0" viewBox="0 0 21 3" preserveAspectRatio="none" shape-rendering="crispEdges"><path fill="#4a8fcc" d="M0 0h1v1h-1z"/><path fill="#ecf3fa" d="M11 0h1v1h-1zM11 1h1v1h-1zM11 2h1v1h-1z"/><path fill="#0b64b8" d="M20 0h1v1h-1zM17 1h1v1h-1zM3 2h1v1h-1zM5 2h1v1h-1zM7 2h1v1h-1zM15 2h1v1h-1zM17 2h1v1h-1zM20 2h1v1h-1z"/><path fill="#86b6de" d="M0 1h1v1h-1zM0 2h1v1h-1zM16 2h1v1h-1z"/><path fill="#bfd8ee" d="M10 1h1v1h-1zM18 1h1v1h-1z"/></svg>
<span class="t" style="left:1022.70px;top:1637.00px;font-size:23px;-webkit-text-stroke:0.5px #343741;">—</span>
<span class="t" style="left:1228.12px;top:1639.00px;font-size:23px;letter-spacing:0.947px;-webkit-text-stroke:0.3px;">packetbeat</span>
<span class="t" style="left:1436.53px;top:1639.00px;font-size:23px;letter-spacing:1.302px;-webkit-text-stroke:0.3px;">dns</span>
<span class="t" style="left:1645.00px;top:1637.00px;font-size:23px;-webkit-text-stroke:0.5px #343741;">—</span>
<span class="t" style="left:1852.40px;top:1637.00px;font-size:23px;-webkit-text-stroke:0.5px #343741;">—</span>
<svg style="left:2061.0px;top:1639.0px" width="119.0" height="21.0" viewBox="0 0 17 3" preserveAspectRatio="none" shape-rendering="crispEdges"><path fill="#ecf3fa" d="M0 0h1v1h-1z"/><path fill="#4a8fcc" d="M2 0h1v1h-1zM5 0h1v1h-1zM15 0h1v1h-1zM6 1h1v1h-1zM3 2h1v1h-1z"/><path fill="#bfd8ee" d="M3 0h1v1h-1zM7 0h1v1h-1zM2 1h1v1h-1zM14 2h1v1h-1z"/><path fill="#86b6de" d="M6 0h1v1h-1zM7 2h1v1h-1zM11 2h1v1h-1z"/><path fill="#0b64b8" d="M8 0h1v1h-1zM10 0h1v1h-1zM13 0h1v1h-1zM16 0h1v1h-1zM3 1h1v1h-1zM7 1h1v1h-1zM10 1h1v1h-1zM12 1h1v1h-1zM16 1h1v1h-1zM2 2h1v1h-1zM4 2h1v1h-1zM5 2h1v1h-1zM6 2h1v1h-1zM8 2h1v1h-1zM10 2h1v1h-1zM13 2h1v1h-1z"/></svg>
<svg style="left:2271.2px;top:1639.0px" width="175.0" height="21.0" viewBox="0 0 25 3" preserveAspectRatio="none" shape-rendering="crispEdges"><path fill="#0b64b8" d="M0 0h1v1h-1zM2 0h1v1h-1zM4 0h1v1h-1zM7 0h1v1h-1zM9 0h1v1h-1zM10 0h1v1h-1zM11 0h1v1h-1zM12 0h1v1h-1zM17 0h1v1h-1zM18 0h1v1h-1zM20 0h1v1h-1zM22 0h1v1h-1zM24 0h1v1h-1zM5 1h1v1h-1zM9 1h1v1h-1zM10 1h1v1h-1zM11 1h1v1h-1zM12 1h1v1h-1zM16 1h1v1h-1zM17 1h1v1h-1zM19 1h1v1h-1zM20 1h1v1h-1zM22 1h1v1h-1zM2 2h1v1h-1zM4 2h1v1h-1zM7 2h1v1h-1zM9 2h1v1h-1zM11 2h1v1h-1zM12 2h1v1h-1zM13 2h1v1h-1zM17 2h1v1h-1zM19 2h1v1h-1zM22 2h1v1h-1zM24 2h1v1h-1z"/><path fill="#4a8fcc" d="M0 1h1v1h-1zM18 1h1v1h-1zM24 1h1v1h-1zM0 2h1v1h-1zM8 2h1v1h-1z"/><path fill="#86b6de" d="M2 1h1v1h-1zM4 1h1v1h-1zM21 2h1v1h-1z"/><path fill="#bfd8ee" d="M6 2h1v1h-1zM10 2h1v1h-1zM16 2h1v1h-1zM20 2h1v1h-1z"/></svg>
<div style="left:2449.5px;top:1635.5px;width:6.3px;height:28px;overflow:hidden"><span class="t" style="left:0.4px;top:2.4px;font-size:23px;color:#0b69b4;-webkit-text-stroke:0.3px">4</span></div>
</section>
<section role="row">
<div class="cb" style="left:47.1px;top:1686.2px;width:22.6px;height:22.6px;"></div>
<svg style="left:0;top:1683.5px" width="270" height="28" viewBox="0 1683.5 270 28"><g transform="translate(107.6,1686.9)" fill="none" stroke="#0b64b0" stroke-width="1.7" stroke-linecap="round" stroke-linejoin="round"><path d="M14.2 1 H19 Q20.4 1 20.4 2.4 V7.4 M17.3 4.2 L4.2 17.3 M1 14.4 V19.4 Q1 20.8 2.4 20.8 H7.2"/></g><g transform="translate(148.1,1685.5)" fill="none" stroke="#0b64b0" stroke-width="1.65" stroke-linejoin="round"><rect x="7.7" y="0.9" width="7" height="5" rx="1.3"/><path d="M11.2 5.9v1.5M3.9 16.9v-2M18.4 16.9v-2M0.5 11.3H21.6" /><rect x="0.9" y="16.9" width="6.2" height="4.7" rx="1.2"/><rect x="15.3" y="16.9" width="6.2" height="4.7" rx="1.2"/><circle cx="3.6" cy="11.3" r="1.35" fill="#fff"/><circle cx="11.2" cy="11.3" r="1.35" fill="#fff"/><path d="M18 9.7 L21 11.3 L18 12.9 Z" fill="#fff" stroke-width="1.3"/></g><g transform="translate(190.0,1694.4)" fill="none" stroke="#98a2b3" stroke-width="1.7"><rect x="0.9" y="0.9" width="4.4" height="4.4"/><rect x="9.8" y="0.9" width="4.4" height="4.4"/><rect x="18.7" y="0.9" width="4.4" height="4.4"/></g></svg>
<span class="t" style="left:321.41px;top:1689.00px;font-size:23px;letter-spacing:0.707px;-webkit-text-stroke:0.3px;">Feb 14, 2024 @ 15:17...</span>
<span class="t" style="left:607.20px;top:1685.00px;font-size:23px;-webkit-text-stroke:0.5px #343741;">—</span>
<svg style="left:814.8px;top:1688.0px" width="147.0" height="21.0" viewBox="0 0 21 3" preserveAspectRatio="none" shape-rendering="crispEdges"><path fill="#bfd8ee" d="M0 0h1v1h-1zM20 1h1v1h-1z"/><path fill="#ecf3fa" d="M11 0h1v1h-1zM11 1h1v1h-1zM11 2h1v1h-1z"/><path fill="#4a8fcc" d="M20 0h1v1h-1zM17 1h1v1h-1zM3 2h1v1h-1z"/><path fill="#86b6de" d="M0 1h1v1h-1zM5 1h1v1h-1zM7 1h1v1h-1zM0 2h1v1h-1zM15 2h1v1h-1zM17 2h1v1h-1z"/><path fill="#0b64b8" d="M10 1h1v1h-1zM18 1h1v1h-1zM5 2h1v1h-1zM7 2h1v1h-1zM16 2h1v1h-1zM20 2h1v1h-1z"/></svg>
<span class="t" style="left:1022.70px;top:1685.00px;font-size:23px;-webkit-text-stroke:0.5px #343741;">—</span>
<span class="t" style="left:1228.12px;top:1687.00px;font-size:23px;letter-spacing:0.947px;-webkit-text-stroke:0.3px;">packetbeat</span>
<span class="t" style="left:1436.53px;top:1687.00px;font-size:23px;letter-spacing:1.302px;-webkit-text-stroke:0.3px;">dns</span>
<span class="t" style="left:1645.00px;top:1685.00px;font-size:23px;-webkit-text-stroke:0.5px #343741;">—</span>
<span class="t" style="left:1852.40px;top:1685.00px;font-size:23px;-webkit-text-stroke:0.5px #343741;">—</span>
<svg style="left:2061.0px;top:1688.0px" width="119.0" height="21.0" viewBox="0 0 17 3" preserveAspectRatio="none" shape-rendering="crispEdges"><path fill="#0b64b8" d="M0 0h1v1h-1zM2 0h1v1h-1zM3 0h1v1h-1zM5 0h1v1h-1zM6 0h1v1h-1zM8 0h1v1h-1zM10 0h1v1h-1zM13 0h1v1h-1zM3 1h1v1h-1zM7 1h1v1h-1zM10 1h1v1h-1zM12 1h1v1h-1zM16 1h1v1h-1zM4 2h1v1h-1zM5 2h1v1h-1zM6 2h1v1h-1zM10 2h1v1h-1zM13 2h1v1h-1z"/><path fill="#4a8fcc" d="M7 0h1v1h-1zM16 0h1v1h-1z"/><path fill="#86b6de" d="M15 0h1v1h-1zM8 2h1v1h-1z"/><path fill="#bfd8ee" d="M2 1h1v1h-1zM6 1h1v1h-1zM2 2h1v1h-1z"/><path fill="#ecf3fa" d="M11 2h1v1h-1z"/></svg>
<svg style="left:2271.2px;top:1688.0px" width="175.0" height="21.0" viewBox="0 0 25 3" preserveAspectRatio="none" shape-rendering="crispEdges"><path fill="#0b64b8" d="M0 0h1v1h-1zM4 0h1v1h-1zM7 0h1v1h-1zM9 0h1v1h-1zM11 0h1v1h-1zM12 0h1v1h-1zM17 0h1v1h-1zM20 0h1v1h-1zM22 0h1v1h-1zM4 1h1v1h-1zM5 1h1v1h-1zM10 1h1v1h-1zM11 1h1v1h-1zM12 1h1v1h-1zM16 1h1v1h-1zM20 1h1v1h-1zM22 1h1v1h-1zM2 2h1v1h-1zM4 2h1v1h-1zM7 2h1v1h-1zM11 2h1v1h-1zM12 2h1v1h-1zM13 2h1v1h-1zM22 2h1v1h-1zM24 2h1v1h-1z"/><path fill="#4a8fcc" d="M2 0h1v1h-1zM10 0h1v1h-1zM24 0h1v1h-1zM0 1h1v1h-1zM0 2h1v1h-1zM8 2h1v1h-1zM9 2h1v1h-1zM19 2h1v1h-1z"/><path fill="#bfd8ee" d="M14 0h1v1h-1zM18 0h1v1h-1zM9 1h1v1h-1zM18 1h1v1h-1z"/><path fill="#86b6de" d="M16 0h1v1h-1zM17 1h1v1h-1zM17 2h1v1h-1zM21 2h1v1h-1z"/><path fill="#ecf3fa" d="M6 2h1v1h-1z"/></svg>
<div style="left:2449.5px;top:1683.5px;width:6.3px;height:28px;overflow:hidden"><span class="t" style="left:0.4px;top:2.4px;font-size:23px;color:#0b69b4;-webkit-text-stroke:0.3px">4</span></div>
</section>
<section role="row">
<div class="cb" style="left:47.1px;top:1734.2px;width:22.6px;height:22.6px;"></div>
<svg style="left:0;top:1731.5px" width="270" height="28" viewBox="0 1731.5 270 28"><g transform="translate(107.6,1734.9)" fill="none" stroke="#0b64b0" stroke-width="1.7" stroke-linecap="round" stroke-linejoin="round"><path d="M14.2 1 H19 Q20.4 1 20.4 2.4 V7.4 M17.3 4.2 L4.2 17.3 M1 14.4 V19.4 Q1 20.8 2.4 20.8 H7.2"/></g><g transform="translate(148.1,1733.5)" fill="none" stroke="#0b64b0" stroke-width="1.65" stroke-linejoin="round"><rect x="7.7" y="0.9" width="7" height="5" rx="1.3"/><path d="M11.2 5.9v1.5M3.9 16.9v-2M18.4 16.9v-2M0.5 11.3H21.6" /><rect x="0.9" y="16.9" width="6.2" height="4.7" rx="1.2"/><rect x="15.3" y="16.9" width="6.2" height="4.7" rx="1.2"/><circle cx="3.6" cy="11.3" r="1.35" fill="#fff"/><circle cx="11.2" cy="11.3" r="1.35" fill="#fff"/><path d="M18 9.7 L21 11.3 L18 12.9 Z" fill="#fff" stroke-width="1.3"/></g><g transform="translate(190.0,1742.4)" fill="none" stroke="#98a2b3" stroke-width="1.7"><rect x="0.9" y="0.9" width="4.4" height="4.4"/><rect x="9.8" y="0.9" width="4.4" height="4.4"/><rect x="18.7" y="0.9" width="4.4" height="4.4"/></g></svg>
<span class="t" style="left:321.41px;top:1737.00px;font-size:23px;letter-spacing:0.707px;-webkit-text-stroke:0.3px;">Feb 14, 2024 @ 15:17...</span>
<span class="t" style="left:607.20px;top:1733.00px;font-size:23px;-webkit-text-stroke:0.5px #343741;">—</span>
<svg style="left:814.8px;top:1744.3px" width="168.0" height="14.0" viewBox="0 0 24 2" preserveAspectRatio="none" shape-rendering="crispEdges"><path fill="#0b64b8" d="M0 0h1v1h-1zM2 0h1v1h-1zM13 0h1v1h-1zM21 0h1v1h-1zM23 0h1v1h-1zM11 1h1v1h-1z"/><path fill="#ecf3fa" d="M5 0h1v1h-1zM11 0h1v1h-1zM20 0h1v1h-1zM0 1h1v1h-1zM2 1h1v1h-1z"/><path fill="#86b6de" d="M7 0h1v1h-1z"/><path fill="#bfd8ee" d="M12 0h1v1h-1zM17 0h1v1h-1zM4 1h1v1h-1z"/></svg>
<span class="t" style="left:1022.06px;top:1735.00px;font-size:23px;letter-spacing:0.943px;-webkit-text-stroke:0.3px;">system</span>
<span class="t" style="left:1228.62px;top:1735.00px;font-size:23px;letter-spacing:0.876px;-webkit-text-stroke:0.3px;">auditbeat</span>
<span class="t" style="left:1436.86px;top:1735.00px;font-size:23px;letter-spacing:0.865px;-webkit-text-stroke:0.3px;">socket</span>
<span class="t" style="left:1643.47px;top:1735.00px;font-size:23px;letter-spacing:0.649px;-webkit-text-stroke:0.3px;">network_flow</span>
<span class="t" style="left:1850.87px;top:1735.00px;font-size:23px;color:#0b69b4;letter-spacing:1.518px;-webkit-text-stroke:0.3px;">root</span>
<svg style="left:2061.0px;top:1737.4px" width="133.0" height="21.0" viewBox="0 0 19 3" preserveAspectRatio="none" shape-rendering="crispEdges"><path fill="#0b64b8" d="M0 0h1v1h-1zM2 0h1v1h-1zM3 0h1v1h-1zM5 0h1v1h-1zM6 0h1v1h-1zM7 0h1v1h-1zM8 0h1v1h-1zM10 0h1v1h-1zM3 1h1v1h-1zM7 1h1v1h-1zM10 1h1v1h-1zM12 1h1v1h-1zM18 1h1v1h-1z"/><path fill="#bfd8ee" d="M12 0h1v1h-1zM13 0h1v1h-1z"/><path fill="#ecf3fa" d="M16 0h1v1h-1zM8 1h1v1h-1zM4 2h1v1h-1zM13 2h1v1h-1zM18 2h1v1h-1z"/><path fill="#86b6de" d="M2 1h1v1h-1zM16 1h1v1h-1z"/></svg>
<svg style="left:2271.2px;top:1737.4px" width="147.0" height="21.0" viewBox="0 0 21 3" preserveAspectRatio="none" shape-rendering="crispEdges"><path fill="#0b64b8" d="M2 0h1v1h-1zM10 0h1v1h-1zM12 0h1v1h-1zM13 0h1v1h-1zM15 0h1v1h-1zM16 0h1v1h-1zM17 0h1v1h-1zM18 0h1v1h-1zM5 1h1v1h-1zM8 1h1v1h-1zM13 1h1v1h-1zM18 1h1v1h-1z"/><path fill="#bfd8ee" d="M7 0h1v1h-1zM8 0h1v1h-1zM0 2h1v1h-1z"/><path fill="#86b6de" d="M19 0h1v1h-1z"/><path fill="#4a8fcc" d="M12 1h1v1h-1z"/><path fill="#ecf3fa" d="M20 1h1v1h-1zM14 2h1v1h-1z"/></svg>
</section>
<section role="row">
<div class="cb" style="left:47.1px;top:1782.2px;width:22.6px;height:22.6px;"></div>
<svg style="left:0;top:1779.5px" width="270" height="28" viewBox="0 1779.5 270 28"><g transform="translate(107.6,1782.9)" fill="none" stroke="#0b64b0" stroke-width="1.7" stroke-linecap="round" stroke-linejoin="round"><path d="M14.2 1 H19 Q20.4 1 20.4 2.4 V7.4 M17.3 4.2 L4.2 17.3 M1 14.4 V19.4 Q1 20.8 2.4 20.8 H7.2"/></g><g transform="translate(148.1,1781.5)" fill="none" stroke="#0b64b0" stroke-width="1.65" stroke-linejoin="round"><rect x="7.7" y="0.9" width="7" height="5" rx="1.3"/><path d="M11.2 5.9v1.5M3.9 16.9v-2M18.4 16.9v-2M0.5 11.3H21.6" /><rect x="0.9" y="16.9" width="6.2" height="4.7" rx="1.2"/><rect x="15.3" y="16.9" width="6.2" height="4.7" rx="1.2"/><circle cx="3.6" cy="11.3" r="1.35" fill="#fff"/><circle cx="11.2" cy="11.3" r="1.35" fill="#fff"/><path d="M18 9.7 L21 11.3 L18 12.9 Z" fill="#fff" stroke-width="1.3"/></g><g transform="translate(190.0,1790.4)" fill="none" stroke="#98a2b3" stroke-width="1.7"><rect x="0.9" y="0.9" width="4.4" height="4.4"/><rect x="9.8" y="0.9" width="4.4" height="4.4"/><rect x="18.7" y="0.9" width="4.4" height="4.4"/></g></svg>
<span class="t" style="left:321.41px;top:1785.00px;font-size:23px;letter-spacing:0.707px;-webkit-text-stroke:0.3px;">Feb 14, 2024 @ 15:17...</span>
<span class="t" style="left:607.20px;top:1781.00px;font-size:23px;-webkit-text-stroke:0.5px #343741;">—</span>
<svg style="left:814.8px;top:1786.4px" width="147.0" height="14.0" viewBox="0 0 21 2" preserveAspectRatio="none" shape-rendering="crispEdges"><path fill="#bfd8ee" d="M0 0h1v1h-1zM17 0h1v1h-1z"/><path fill="#ecf3fa" d="M1 0h1v1h-1zM11 0h1v1h-1zM10 1h1v1h-1zM11 1h1v1h-1zM18 1h1v1h-1z"/><path fill="#4a8fcc" d="M3 0h1v1h-1zM7 0h1v1h-1zM13 0h1v1h-1z"/><path fill="#86b6de" d="M5 0h1v1h-1zM8 0h1v1h-1zM16 0h1v1h-1zM0 1h1v1h-1zM5 1h1v1h-1zM17 1h1v1h-1z"/><path fill="#0b64b8" d="M7 1h1v1h-1zM20 1h1v1h-1z"/></svg>
<span class="t" style="left:1022.06px;top:1783.00px;font-size:23px;letter-spacing:0.943px;-webkit-text-stroke:0.3px;">system</span>
<span class="t" style="left:1228.62px;top:1783.00px;font-size:23px;letter-spacing:0.876px;-webkit-text-stroke:0.3px;">auditbeat</span>
<span class="t" style="left:1436.86px;top:1783.00px;font-size:23px;letter-spacing:0.865px;-webkit-text-stroke:0.3px;">socket</span>
<span class="t" style="left:1643.47px;top:1783.00px;font-size:23px;letter-spacing:0.649px;-webkit-text-stroke:0.3px;">network_flow</span>
<span class="t" style="left:1850.87px;top:1783.00px;font-size:23px;color:#0b69b4;letter-spacing:1.518px;-webkit-text-stroke:0.3px;">root</span>
<svg style="left:2061.0px;top:1786.4px" width="119.0" height="14.0" viewBox="0 0 17 2" preserveAspectRatio="none" shape-rendering="crispEdges"><path fill="#4a8fcc" d="M0 0h1v1h-1zM8 0h1v1h-1zM12 0h1v1h-1z"/><path fill="#0b64b8" d="M2 0h1v1h-1zM3 0h1v1h-1zM5 0h1v1h-1zM6 0h1v1h-1zM7 0h1v1h-1zM10 0h1v1h-1zM3 1h1v1h-1zM7 1h1v1h-1zM10 1h1v1h-1zM12 1h1v1h-1z"/><path fill="#86b6de" d="M16 0h1v1h-1zM2 1h1v1h-1z"/><path fill="#bfd8ee" d="M8 1h1v1h-1z"/><path fill="#ecf3fa" d="M16 1h1v1h-1z"/></svg>
<svg style="left:2271.2px;top:1786.4px" width="161.0" height="14.0" viewBox="0 0 23 2" preserveAspectRatio="none" shape-rendering="crispEdges"><path fill="#4a8fcc" d="M0 0h1v1h-1zM5 0h1v1h-1zM0 1h1v1h-1zM5 1h1v1h-1zM7 1h1v1h-1zM11 1h1v1h-1z"/><path fill="#86b6de" d="M8 0h1v1h-1zM21 0h1v1h-1z"/><path fill="#0b64b8" d="M9 0h1v1h-1zM12 0h1v1h-1zM14 0h1v1h-1zM16 0h1v1h-1zM18 0h1v1h-1zM10 1h1v1h-1zM12 1h1v1h-1zM16 1h1v1h-1z"/><path fill="#bfd8ee" d="M17 0h1v1h-1zM22 1h1v1h-1z"/><path fill="#ecf3fa" d="M3 1h1v1h-1zM4 1h1v1h-1zM8 1h1v1h-1z"/></svg>
<div style="left:2449.5px;top:1779.5px;width:6.3px;height:28px;overflow:hidden"><span class="t" style="left:0.4px;top:2.4px;font-size:23px;color:#0b69b4;-webkit-text-stroke:0.3px">4</span></div>
</section>
<section role="row">
<div class="cb" style="left:47.1px;top:1830.2px;width:22.6px;height:22.6px;"></div>
<svg style="left:0;top:1827.5px" width="270" height="28" viewBox="0 1827.5 270 28"><g transform="translate(107.6,1830.9)" fill="none" stroke="#0b64b0" stroke-width="1.7" stroke-linecap="round" stroke-linejoin="round"><path d="M14.2 1 H19 Q20.4 1 20.4 2.4 V7.4 M17.3 4.2 L4.2 17.3 M1 14.4 V19.4 Q1 20.8 2.4 20.8 H7.2"/></g><g transform="translate(148.1,1829.5)" fill="none" stroke="#0b64b0" stroke-width="1.65" stroke-linejoin="round"><rect x="7.7" y="0.9" width="7" height="5" rx="1.3"/><path d="M11.2 5.9v1.5M3.9 16.9v-2M18.4 16.9v-2M0.5 11.3H21.6" /><rect x="0.9" y="16.9" width="6.2" height="4.7" rx="1.2"/><rect x="15.3" y="16.9" width="6.2" height="4.7" rx="1.2"/><circle cx="3.6" cy="11.3" r="1.35" fill="#fff"/><circle cx="11.2" cy="11.3" r="1.35" fill="#fff"/><path d="M18 9.7 L21 11.3 L18 12.9 Z" fill="#fff" stroke-width="1.3"/></g><g transform="translate(190.0,1838.4)" fill="none" stroke="#98a2b3" stroke-width="1.7"><rect x="0.9" y="0.9" width="4.4" height="4.4"/><rect x="9.8" y="0.9" width="4.4" height="4.4"/><rect x="18.7" y="0.9" width="4.4" height="4.4"/></g></svg>
<span class="t" style="left:321.41px;top:1833.00px;font-size:23px;letter-spacing:0.707px;-webkit-text-stroke:0.3px;">Feb 14, 2024 @ 15:17...</span>
<span class="t" style="left:607.20px;top:1829.00px;font-size:23px;-webkit-text-stroke:0.5px #343741;">—</span>
<svg style="left:814.8px;top:1834.8px" width="168.0" height="14.0" viewBox="0 0 24 2" preserveAspectRatio="none" shape-rendering="crispEdges"><path fill="#0b64b8" d="M0 0h1v1h-1zM1 0h1v1h-1zM2 0h1v1h-1zM5 0h1v1h-1zM8 0h1v1h-1zM12 0h1v1h-1zM13 0h1v1h-1zM15 0h1v1h-1zM21 0h1v1h-1zM22 0h1v1h-1zM0 1h1v1h-1zM1 1h1v1h-1zM3 1h1v1h-1zM4 1h1v1h-1zM6 1h1v1h-1zM7 1h1v1h-1zM8 1h1v1h-1zM22 1h1v1h-1z"/><path fill="#bfd8ee" d="M6 0h1v1h-1zM23 0h1v1h-1z"/><path fill="#4a8fcc" d="M7 0h1v1h-1z"/><path fill="#86b6de" d="M20 0h1v1h-1zM2 1h1v1h-1zM20 1h1v1h-1zM23 1h1v1h-1z"/></svg>
<span class="t" style="left:984.04px;top:1831.00px;font-size:23px;font-weight:700;color:#0b69b4;letter-spacing:-0.314px;">...</span>
<span class="t" style="left:1022.06px;top:1831.00px;font-size:23px;letter-spacing:0.943px;-webkit-text-stroke:0.3px;">system</span>
<span class="t" style="left:1228.62px;top:1831.00px;font-size:23px;letter-spacing:0.876px;-webkit-text-stroke:0.3px;">auditbeat</span>
<span class="t" style="left:1436.86px;top:1831.00px;font-size:23px;letter-spacing:0.865px;-webkit-text-stroke:0.3px;">socket</span>
<span class="t" style="left:1643.47px;top:1831.00px;font-size:23px;letter-spacing:0.649px;-webkit-text-stroke:0.3px;">network_flow</span>
<span class="t" style="left:1850.87px;top:1831.00px;font-size:23px;color:#0b69b4;letter-spacing:1.518px;-webkit-text-stroke:0.3px;">root</span>
<svg style="left:2061.0px;top:1834.8px" width="105.0" height="14.0" viewBox="0 0 15 2" preserveAspectRatio="none" shape-rendering="crispEdges"><path fill="#bfd8ee" d="M2 0h1v1h-1zM11 0h1v1h-1zM11 1h1v1h-1z"/><path fill="#0b64b8" d="M3 0h1v1h-1zM5 0h1v1h-1zM7 0h1v1h-1zM10 0h1v1h-1zM7 1h1v1h-1zM10 1h1v1h-1z"/><path fill="#86b6de" d="M8 0h1v1h-1zM2 1h1v1h-1zM8 1h1v1h-1z"/><path fill="#4a8fcc" d="M14 0h1v1h-1zM14 1h1v1h-1z"/></svg>
<svg style="left:2271.2px;top:1834.8px" width="84.0" height="14.0" viewBox="0 0 12 2" preserveAspectRatio="none" shape-rendering="crispEdges"><path fill="#4a8fcc" d="M0 0h1v1h-1zM0 1h1v1h-1zM8 1h1v1h-1z"/><path fill="#0b64b8" d="M8 0h1v1h-1zM11 0h1v1h-1zM2 1h1v1h-1zM4 1h1v1h-1zM11 1h1v1h-1z"/></svg>
</section>
<section role="row">
<div class="cb" style="left:47.1px;top:1878.2px;width:22.6px;height:22.6px;"></div>
<svg style="left:0;top:1875.5px" width="270" height="28" viewBox="0 1875.5 270 28"><g transform="translate(107.6,1878.9)" fill="none" stroke="#0b64b0" stroke-width="1.7" stroke-linecap="round" stroke-linejoin="round"><path d="M14.2 1 H19 Q20.4 1 20.4 2.4 V7.4 M17.3 4.2 L4.2 17.3 M1 14.4 V19.4 Q1 20.8 2.4 20.8 H7.2"/></g><g transform="translate(148.1,1877.5)" fill="none" stroke="#0b64b0" stroke-width="1.65" stroke-linejoin="round"><rect x="7.7" y="0.9" width="7" height="5" rx="1.3"/><path d="M11.2 5.9v1.5M3.9 16.9v-2M18.4 16.9v-2M0.5 11.3H21.6" /><rect x="0.9" y="16.9" width="6.2" height="4.7" rx="1.2"/><rect x="15.3" y="16.9" width="6.2" height="4.7" rx="1.2"/><circle cx="3.6" cy="11.3" r="1.35" fill="#fff"/><circle cx="11.2" cy="11.3" r="1.35" fill="#fff"/><path d="M18 9.7 L21 11.3 L18 12.9 Z" fill="#fff" stroke-width="1.3"/></g><g transform="translate(190.0,1886.4)" fill="none" stroke="#98a2b3" stroke-width="1.7"><rect x="0.9" y="0.9" width="4.4" height="4.4"/><rect x="9.8" y="0.9" width="4.4" height="4.4"/><rect x="18.7" y="0.9" width="4.4" height="4.4"/></g></svg>
<span class="t" style="left:321.41px;top:1881.00px;font-size:23px;letter-spacing:0.707px;-webkit-text-stroke:0.3px;">Feb 14, 2024 @ 15:17...</span>
<span class="t" style="left:607.20px;top:1877.00px;font-size:23px;-webkit-text-stroke:0.5px #343741;">—</span>
<svg style="left:814.8px;top:1883.3px" width="168.0" height="14.0" viewBox="0 0 24 2" preserveAspectRatio="none" shape-rendering="crispEdges"><path fill="#0b64b8" d="M0 0h1v1h-1zM1 0h1v1h-1zM2 0h1v1h-1zM5 0h1v1h-1zM7 0h1v1h-1zM8 0h1v1h-1zM12 0h1v1h-1zM21 0h1v1h-1zM22 0h1v1h-1zM0 1h1v1h-1zM1 1h1v1h-1zM3 1h1v1h-1zM6 1h1v1h-1zM7 1h1v1h-1zM8 1h1v1h-1z"/><path fill="#ecf3fa" d="M4 0h1v1h-1zM5 1h1v1h-1z"/><path fill="#4a8fcc" d="M6 0h1v1h-1zM13 0h1v1h-1zM15 0h1v1h-1zM4 1h1v1h-1zM22 1h1v1h-1zM23 1h1v1h-1z"/><path fill="#86b6de" d="M20 0h1v1h-1zM2 1h1v1h-1zM20 1h1v1h-1z"/><path fill="#bfd8ee" d="M23 0h1v1h-1z"/></svg>
<span class="t" style="left:984.04px;top:1879.00px;font-size:23px;font-weight:700;color:#0b69b4;letter-spacing:-0.314px;">...</span>
<span class="t" style="left:1022.06px;top:1879.00px;font-size:23px;letter-spacing:0.943px;-webkit-text-stroke:0.3px;">system</span>
<span class="t" style="left:1228.62px;top:1879.00px;font-size:23px;letter-spacing:0.876px;-webkit-text-stroke:0.3px;">auditbeat</span>
<span class="t" style="left:1436.86px;top:1879.00px;font-size:23px;letter-spacing:0.865px;-webkit-text-stroke:0.3px;">socket</span>
<span class="t" style="left:1643.47px;top:1879.00px;font-size:23px;letter-spacing:0.649px;-webkit-text-stroke:0.3px;">network_flow</span>
<span class="t" style="left:1850.87px;top:1879.00px;font-size:23px;color:#0b69b4;letter-spacing:1.518px;-webkit-text-stroke:0.3px;">root</span>
<svg style="left:2061.0px;top:1890.9px" width="7.0" height="7.0" viewBox="0 0 1 1" preserveAspectRatio="none" shape-rendering="crispEdges"><path fill="#bfd8ee" d="M0 0h1v1h-1z"/></svg>
<svg style="left:2271.2px;top:1883.4px" width="21.0" height="14.0" viewBox="0 0 3 2" preserveAspectRatio="none" shape-rendering="crispEdges"><path fill="#0b64b8" d="M2 0h1v1h-1zM2 1h1v1h-1z"/><path fill="#bfd8ee" d="M0 1h1v1h-1z"/></svg>
</section>
<section role="row">
<div class="cb" style="left:47.1px;top:1926.2px;width:22.6px;height:22.6px;"></div>
<svg style="left:0;top:1923.5px" width="270" height="28" viewBox="0 1923.5 270 28"><g transform="translate(107.6,1926.9)" fill="none" stroke="#0b64b0" stroke-width="1.7" stroke-linecap="round" stroke-linejoin="round"><path d="M14.2 1 H19 Q20.4 1 20.4 2.4 V7.4 M17.3 4.2 L4.2 17.3 M1 14.4 V19.4 Q1 20.8 2.4 20.8 H7.2"/></g><g transform="translate(148.1,1925.5)" fill="none" stroke="#0b64b0" stroke-width="1.65" stroke-linejoin="round"><rect x="7.7" y="0.9" width="7" height="5" rx="1.3"/><path d="M11.2 5.9v1.5M3.9 16.9v-2M18.4 16.9v-2M0.5 11.3H21.6" /><rect x="0.9" y="16.9" width="6.2" height="4.7" rx="1.2"/><rect x="15.3" y="16.9" width="6.2" height="4.7" rx="1.2"/><circle cx="3.6" cy="11.3" r="1.35" fill="#fff"/><circle cx="11.2" cy="11.3" r="1.35" fill="#fff"/><path d="M18 9.7 L21 11.3 L18 12.9 Z" fill="#fff" stroke-width="1.3"/></g><g transform="translate(190.0,1934.4)" fill="none" stroke="#98a2b3" stroke-width="1.7"><rect x="0.9" y="0.9" width="4.4" height="4.4"/><rect x="9.8" y="0.9" width="4.4" height="4.4"/><rect x="18.7" y="0.9" width="4.4" height="4.4"/></g></svg>
<span class="t" style="left:321.41px;top:1929.00px;font-size:23px;letter-spacing:0.707px;-webkit-text-stroke:0.3px;">Feb 14, 2024 @ 15:17...</span>
<span class="t" style="left:607.20px;top:1925.00px;font-size:23px;-webkit-text-stroke:0.5px #343741;">—</span>
<svg style="left:814.8px;top:1926.0px" width="168.0" height="21.0" viewBox="0 0 24 3" preserveAspectRatio="none" shape-rendering="crispEdges"><path fill="#86b6de" d="M1 0h1v1h-1zM4 1h1v1h-1zM5 1h1v1h-1zM20 1h1v1h-1zM21 1h1v1h-1zM2 2h1v1h-1zM20 2h1v1h-1z"/><path fill="#0b64b8" d="M0 1h1v1h-1zM1 1h1v1h-1zM2 1h1v1h-1zM3 1h1v1h-1zM6 1h1v1h-1zM7 1h1v1h-1zM8 1h1v1h-1zM22 1h1v1h-1zM0 2h1v1h-1zM1 2h1v1h-1zM3 2h1v1h-1zM6 2h1v1h-1zM7 2h1v1h-1zM8 2h1v1h-1zM23 2h1v1h-1z"/><path fill="#ecf3fa" d="M12 1h1v1h-1zM15 2h1v1h-1z"/><path fill="#bfd8ee" d="M23 1h1v1h-1zM4 2h1v1h-1z"/><path fill="#4a8fcc" d="M5 2h1v1h-1zM22 2h1v1h-1z"/></svg>
<span class="t" style="left:984.04px;top:1927.00px;font-size:23px;font-weight:700;color:#0b69b4;letter-spacing:-0.314px;">...</span>
<span class="t" style="left:1022.06px;top:1927.00px;font-size:23px;letter-spacing:0.943px;-webkit-text-stroke:0.3px;">system</span>
<span class="t" style="left:1228.62px;top:1927.00px;font-size:23px;letter-spacing:0.876px;-webkit-text-stroke:0.3px;">auditbeat</span>
<span class="t" style="left:1436.86px;top:1927.00px;font-size:23px;letter-spacing:0.865px;-webkit-text-stroke:0.3px;">socket</span>
<span class="t" style="left:1643.47px;top:1927.00px;font-size:23px;letter-spacing:0.649px;-webkit-text-stroke:0.3px;">network_flow</span>
<span class="t" style="left:1850.87px;top:1927.00px;font-size:23px;color:#0b69b4;letter-spacing:1.518px;-webkit-text-stroke:0.3px;">root</span>
<svg style="left:2061.0px;top:1926.0px" width="133.0" height="21.0" viewBox="0 0 19 3" preserveAspectRatio="none" shape-rendering="crispEdges"><path fill="#ecf3fa" d="M2 0h1v1h-1zM5 0h1v1h-1zM8 1h1v1h-1zM14 2h1v1h-1z"/><path fill="#bfd8ee" d="M8 0h1v1h-1zM11 2h1v1h-1zM18 2h1v1h-1z"/><path fill="#4a8fcc" d="M10 0h1v1h-1zM16 0h1v1h-1zM18 0h1v1h-1zM13 2h1v1h-1z"/><path fill="#86b6de" d="M13 0h1v1h-1zM2 1h1v1h-1zM6 1h1v1h-1zM6 2h1v1h-1z"/><path fill="#0b64b8" d="M3 1h1v1h-1zM7 1h1v1h-1zM10 1h1v1h-1zM12 1h1v1h-1zM16 1h1v1h-1zM18 1h1v1h-1zM2 2h1v1h-1zM3 2h1v1h-1zM4 2h1v1h-1zM5 2h1v1h-1zM7 2h1v1h-1zM8 2h1v1h-1zM10 2h1v1h-1zM16 2h1v1h-1z"/></svg>
<svg style="left:2271.2px;top:1926.0px" width="175.0" height="21.0" viewBox="0 0 25 3" preserveAspectRatio="none" shape-rendering="crispEdges"><path fill="#86b6de" d="M0 0h1v1h-1zM4 0h1v1h-1zM7 0h1v1h-1zM17 0h1v1h-1zM19 0h1v1h-1zM22 0h1v1h-1zM22 1h1v1h-1zM2 2h1v1h-1zM18 2h1v1h-1zM22 2h1v1h-1z"/><path fill="#4a8fcc" d="M2 0h1v1h-1zM9 0h1v1h-1zM10 0h1v1h-1zM12 0h1v1h-1zM24 0h1v1h-1zM0 1h1v1h-1zM0 2h1v1h-1zM4 2h1v1h-1zM7 2h1v1h-1zM16 2h1v1h-1z"/><path fill="#0b64b8" d="M2 1h1v1h-1zM5 1h1v1h-1zM9 1h1v1h-1zM11 1h1v1h-1zM12 1h1v1h-1zM16 1h1v1h-1zM17 1h1v1h-1zM18 1h1v1h-1zM24 1h1v1h-1zM9 2h1v1h-1zM10 2h1v1h-1zM12 2h1v1h-1zM13 2h1v1h-1zM17 2h1v1h-1zM19 2h1v1h-1z"/><path fill="#bfd8ee" d="M4 1h1v1h-1zM10 1h1v1h-1zM8 2h1v1h-1zM21 2h1v1h-1zM24 2h1v1h-1z"/><path fill="#ecf3fa" d="M19 1h1v1h-1zM6 2h1v1h-1z"/></svg>
<div style="left:2449.5px;top:1923.5px;width:6.3px;height:28px;overflow:hidden"><span class="t" style="left:0.4px;top:2.4px;font-size:23px;color:#0b69b4;-webkit-text-stroke:0.3px">4</span></div>
</section>
<section role="row">
<div class="cb" style="left:47.1px;top:1974.2px;width:22.6px;height:22.6px;"></div>
<svg style="left:0;top:1971.5px" width="270" height="28" viewBox="0 1971.5 270 28"><g transform="translate(107.6,1974.9)" fill="none" stroke="#0b64b0" stroke-width="1.7" stroke-linecap="round" stroke-linejoin="round"><path d="M14.2 1 H19 Q20.4 1 20.4 2.4 V7.4 M17.3 4.2 L4.2 17.3 M1 14.4 V19.4 Q1 20.8 2.4 20.8 H7.2"/></g><g transform="translate(148.1,1973.5)" fill="none" stroke="#0b64b0" stroke-width="1.65" stroke-linejoin="round"><rect x="7.7" y="0.9" width="7" height="5" rx="1.3"/><path d="M11.2 5.9v1.5M3.9 16.9v-2M18.4 16.9v-2M0.5 11.3H21.6" /><rect x="0.9" y="16.9" width="6.2" height="4.7" rx="1.2"/><rect x="15.3" y="16.9" width="6.2" height="4.7" rx="1.2"/><circle cx="3.6" cy="11.3" r="1.35" fill="#fff"/><circle cx="11.2" cy="11.3" r="1.35" fill="#fff"/><path d="M18 9.7 L21 11.3 L18 12.9 Z" fill="#fff" stroke-width="1.3"/></g><g transform="translate(190.0,1982.4)" fill="none" stroke="#98a2b3" stroke-width="1.7"><rect x="0.9" y="0.9" width="4.4" height="4.4"/><rect x="9.8" y="0.9" width="4.4" height="4.4"/><rect x="18.7" y="0.9" width="4.4" height="4.4"/></g></svg>
<span class="t" style="left:321.41px;top:1977.00px;font-size:23px;letter-spacing:0.707px;-webkit-text-stroke:0.3px;">Feb 14, 2024 @ 15:17...</span>
<span class="t" style="left:607.20px;top:1973.00px;font-size:23px;-webkit-text-stroke:0.5px #343741;">—</span>
<svg style="left:814.8px;top:1974.9px" width="168.0" height="21.0" viewBox="0 0 24 3" preserveAspectRatio="none" shape-rendering="crispEdges"><path fill="#86b6de" d="M0 0h1v1h-1zM8 0h1v1h-1zM20 1h1v1h-1zM2 2h1v1h-1zM20 2h1v1h-1z"/><path fill="#0b64b8" d="M1 0h1v1h-1zM0 1h1v1h-1zM1 1h1v1h-1zM3 1h1v1h-1zM7 1h1v1h-1zM8 1h1v1h-1zM22 1h1v1h-1zM0 2h1v1h-1zM1 2h1v1h-1zM3 2h1v1h-1zM5 2h1v1h-1zM6 2h1v1h-1zM7 2h1v1h-1zM8 2h1v1h-1zM15 2h1v1h-1z"/><path fill="#4a8fcc" d="M2 1h1v1h-1zM4 1h1v1h-1zM23 2h1v1h-1z"/><path fill="#ecf3fa" d="M6 1h1v1h-1zM18 1h1v1h-1zM21 1h1v1h-1z"/><path fill="#bfd8ee" d="M9 1h1v1h-1zM17 1h1v1h-1zM23 1h1v1h-1zM22 2h1v1h-1z"/></svg>
<span class="t" style="left:984.04px;top:1975.00px;font-size:23px;font-weight:700;color:#0b69b4;letter-spacing:-0.314px;">...</span>
<span class="t" style="left:1022.06px;top:1975.00px;font-size:23px;letter-spacing:0.943px;-webkit-text-stroke:0.3px;">system</span>
<span class="t" style="left:1228.62px;top:1975.00px;font-size:23px;letter-spacing:0.876px;-webkit-text-stroke:0.3px;">auditbeat</span>
<span class="t" style="left:1436.86px;top:1975.00px;font-size:23px;letter-spacing:0.865px;-webkit-text-stroke:0.3px;">socket</span>
<span class="t" style="left:1643.47px;top:1975.00px;font-size:23px;letter-spacing:0.649px;-webkit-text-stroke:0.3px;">network_flow</span>
<span class="t" style="left:1850.87px;top:1975.00px;font-size:23px;color:#0b69b4;letter-spacing:1.518px;-webkit-text-stroke:0.3px;">root</span>
<svg style="left:2061.0px;top:1974.9px" width="133.0" height="21.0" viewBox="0 0 19 3" preserveAspectRatio="none" shape-rendering="crispEdges"><path fill="#ecf3fa" d="M0 0h1v1h-1z"/><path fill="#4a8fcc" d="M2 0h1v1h-1zM5 0h1v1h-1zM6 1h1v1h-1zM3 2h1v1h-1z"/><path fill="#bfd8ee" d="M3 0h1v1h-1zM7 0h1v1h-1zM2 1h1v1h-1zM14 2h1v1h-1z"/><path fill="#86b6de" d="M6 0h1v1h-1zM7 2h1v1h-1zM11 2h1v1h-1z"/><path fill="#0b64b8" d="M8 0h1v1h-1zM10 0h1v1h-1zM13 0h1v1h-1zM16 0h1v1h-1zM18 0h1v1h-1zM3 1h1v1h-1zM7 1h1v1h-1zM10 1h1v1h-1zM12 1h1v1h-1zM16 1h1v1h-1zM18 1h1v1h-1zM2 2h1v1h-1zM4 2h1v1h-1zM5 2h1v1h-1zM6 2h1v1h-1zM8 2h1v1h-1zM10 2h1v1h-1zM13 2h1v1h-1zM16 2h1v1h-1zM18 2h1v1h-1z"/></svg>
<svg style="left:2271.2px;top:1974.9px" width="175.0" height="21.0" viewBox="0 0 25 3" preserveAspectRatio="none" shape-rendering="crispEdges"><path fill="#0b64b8" d="M0 0h1v1h-1zM2 0h1v1h-1zM4 0h1v1h-1zM7 0h1v1h-1zM9 0h1v1h-1zM10 0h1v1h-1zM11 0h1v1h-1zM12 0h1v1h-1zM17 0h1v1h-1zM18 0h1v1h-1zM20 0h1v1h-1zM22 0h1v1h-1zM24 0h1v1h-1zM5 1h1v1h-1zM9 1h1v1h-1zM10 1h1v1h-1zM11 1h1v1h-1zM12 1h1v1h-1zM16 1h1v1h-1zM17 1h1v1h-1zM19 1h1v1h-1zM20 1h1v1h-1zM22 1h1v1h-1zM2 2h1v1h-1zM4 2h1v1h-1zM7 2h1v1h-1zM9 2h1v1h-1zM11 2h1v1h-1zM12 2h1v1h-1zM13 2h1v1h-1zM17 2h1v1h-1zM19 2h1v1h-1zM22 2h1v1h-1zM24 2h1v1h-1z"/><path fill="#4a8fcc" d="M0 1h1v1h-1zM18 1h1v1h-1zM24 1h1v1h-1zM0 2h1v1h-1zM8 2h1v1h-1z"/><path fill="#86b6de" d="M2 1h1v1h-1zM4 1h1v1h-1zM21 2h1v1h-1z"/><path fill="#bfd8ee" d="M6 2h1v1h-1zM10 2h1v1h-1zM16 2h1v1h-1zM20 2h1v1h-1z"/></svg>
<div style="left:2449.5px;top:1971.5px;width:6.3px;height:28px;overflow:hidden"><span class="t" style="left:0.4px;top:2.4px;font-size:23px;color:#0b69b4;-webkit-text-stroke:0.3px">4</span></div>
</section>
<section role="row">
<div class="cb" style="left:47.1px;top:2022.2px;width:22.6px;height:22.6px;"></div>
<svg style="left:0;top:2019.5px" width="270" height="28" viewBox="0 2019.5 270 28"><g transform="translate(107.6,2022.9)" fill="none" stroke="#0b64b0" stroke-width="1.7" stroke-linecap="round" stroke-linejoin="round"><path d="M14.2 1 H19 Q20.4 1 20.4 2.4 V7.4 M17.3 4.2 L4.2 17.3 M1 14.4 V19.4 Q1 20.8 2.4 20.8 H7.2"/></g><g transform="translate(148.1,2021.5)" fill="none" stroke="#0b64b0" stroke-width="1.65" stroke-linejoin="round"><rect x="7.7" y="0.9" width="7" height="5" rx="1.3"/><path d="M11.2 5.9v1.5M3.9 16.9v-2M18.4 16.9v-2M0.5 11.3H21.6" /><rect x="0.9" y="16.9" width="6.2" height="4.7" rx="1.2"/><rect x="15.3" y="16.9" width="6.2" height="4.7" rx="1.2"/><circle cx="3.6" cy="11.3" r="1.35" fill="#fff"/><circle cx="11.2" cy="11.3" r="1.35" fill="#fff"/><path d="M18 9.7 L21 11.3 L18 12.9 Z" fill="#fff" stroke-width="1.3"/></g><g transform="translate(190.0,2030.4)" fill="none" stroke="#98a2b3" stroke-width="1.7"><rect x="0.9" y="0.9" width="4.4" height="4.4"/><rect x="9.8" y="0.9" width="4.4" height="4.4"/><rect x="18.7" y="0.9" width="4.4" height="4.4"/></g></svg>
<span class="t" style="left:321.41px;top:2025.00px;font-size:23px;letter-spacing:0.707px;-webkit-text-stroke:0.3px;">Feb 14, 2024 @ 15:17...</span>
<span class="t" style="left:607.20px;top:2021.00px;font-size:23px;-webkit-text-stroke:0.5px #343741;">—</span>
<svg style="left:814.8px;top:2023.9px" width="168.0" height="21.0" viewBox="0 0 24 3" preserveAspectRatio="none" shape-rendering="crispEdges"><path fill="#0b64b8" d="M0 0h1v1h-1zM1 0h1v1h-1zM8 0h1v1h-1zM0 1h1v1h-1zM1 1h1v1h-1zM3 1h1v1h-1zM4 1h1v1h-1zM7 1h1v1h-1zM8 1h1v1h-1zM9 1h1v1h-1zM17 1h1v1h-1zM22 1h1v1h-1zM1 2h1v1h-1zM3 2h1v1h-1zM5 2h1v1h-1zM7 2h1v1h-1zM15 2h1v1h-1z"/><path fill="#86b6de" d="M2 1h1v1h-1zM5 1h1v1h-1zM15 1h1v1h-1zM20 1h1v1h-1zM2 2h1v1h-1zM6 2h1v1h-1zM20 2h1v1h-1z"/><path fill="#bfd8ee" d="M18 1h1v1h-1zM23 1h1v1h-1zM8 2h1v1h-1zM23 2h1v1h-1z"/><path fill="#4a8fcc" d="M0 2h1v1h-1z"/></svg>
<span class="t" style="left:984.04px;top:2023.00px;font-size:23px;font-weight:700;color:#0b69b4;letter-spacing:-0.314px;">...</span>
<span class="t" style="left:1022.06px;top:2023.00px;font-size:23px;letter-spacing:0.943px;-webkit-text-stroke:0.3px;">system</span>
<span class="t" style="left:1228.62px;top:2023.00px;font-size:23px;letter-spacing:0.876px;-webkit-text-stroke:0.3px;">auditbeat</span>
<span class="t" style="left:1436.86px;top:2023.00px;font-size:23px;letter-spacing:0.865px;-webkit-text-stroke:0.3px;">socket</span>
<span class="t" style="left:1643.47px;top:2023.00px;font-size:23px;letter-spacing:0.649px;-webkit-text-stroke:0.3px;">network_flow</span>
<span class="t" style="left:1850.87px;top:2023.00px;font-size:23px;color:#0b69b4;letter-spacing:1.518px;-webkit-text-stroke:0.3px;">root</span>
<svg style="left:2061.0px;top:2023.9px" width="133.0" height="21.0" viewBox="0 0 19 3" preserveAspectRatio="none" shape-rendering="crispEdges"><path fill="#0b64b8" d="M0 0h1v1h-1zM2 0h1v1h-1zM3 0h1v1h-1zM5 0h1v1h-1zM6 0h1v1h-1zM8 0h1v1h-1zM10 0h1v1h-1zM13 0h1v1h-1zM16 0h1v1h-1zM3 1h1v1h-1zM7 1h1v1h-1zM10 1h1v1h-1zM12 1h1v1h-1zM16 1h1v1h-1zM4 2h1v1h-1zM5 2h1v1h-1zM6 2h1v1h-1zM10 2h1v1h-1zM13 2h1v1h-1zM16 2h1v1h-1zM18 2h1v1h-1z"/><path fill="#4a8fcc" d="M7 0h1v1h-1zM18 0h1v1h-1zM18 1h1v1h-1z"/><path fill="#bfd8ee" d="M2 1h1v1h-1zM6 1h1v1h-1zM2 2h1v1h-1z"/><path fill="#86b6de" d="M8 2h1v1h-1z"/><path fill="#ecf3fa" d="M11 2h1v1h-1z"/></svg>
<svg style="left:2271.2px;top:2023.9px" width="147.0" height="21.0" viewBox="0 0 21 3" preserveAspectRatio="none" shape-rendering="crispEdges"><path fill="#4a8fcc" d="M0 0h1v1h-1zM5 0h1v1h-1zM13 0h1v1h-1zM20 0h1v1h-1zM13 1h1v1h-1zM20 1h1v1h-1zM12 2h1v1h-1zM18 2h1v1h-1zM20 2h1v1h-1z"/><path fill="#86b6de" d="M2 0h1v1h-1zM19 0h1v1h-1zM5 1h1v1h-1z"/><path fill="#0b64b8" d="M7 0h1v1h-1zM10 0h1v1h-1zM12 0h1v1h-1zM14 0h1v1h-1zM15 0h1v1h-1zM16 0h1v1h-1zM17 0h1v1h-1zM0 1h1v1h-1zM8 1h1v1h-1zM12 1h1v1h-1zM14 1h1v1h-1zM0 2h1v1h-1zM7 2h1v1h-1zM14 2h1v1h-1zM15 2h1v1h-1zM16 2h1v1h-1z"/><path fill="#ecf3fa" d="M15 1h1v1h-1zM5 2h1v1h-1zM17 2h1v1h-1z"/><path fill="#bfd8ee" d="M9 2h1v1h-1z"/></svg>
</section>
<section role="row">
<div class="cb" style="left:47.1px;top:2070.2px;width:22.6px;height:22.6px;"></div>
<svg style="left:0;top:2067.5px" width="270" height="28" viewBox="0 2067.5 270 28"><g transform="translate(107.6,2070.9)" fill="none" stroke="#0b64b0" stroke-width="1.7" stroke-linecap="round" stroke-linejoin="round"><path d="M14.2 1 H19 Q20.4 1 20.4 2.4 V7.4 M17.3 4.2 L4.2 17.3 M1 14.4 V19.4 Q1 20.8 2.4 20.8 H7.2"/></g><g transform="translate(148.1,2069.5)" fill="none" stroke="#0b64b0" stroke-width="1.65" stroke-linejoin="round"><rect x="7.7" y="0.9" width="7" height="5" rx="1.3"/><path d="M11.2 5.9v1.5M3.9 16.9v-2M18.4 16.9v-2M0.5 11.3H21.6" /><rect x="0.9" y="16.9" width="6.2" height="4.7" rx="1.2"/><rect x="15.3" y="16.9" width="6.2" height="4.7" rx="1.2"/><circle cx="3.6" cy="11.3" r="1.35" fill="#fff"/><circle cx="11.2" cy="11.3" r="1.35" fill="#fff"/><path d="M18 9.7 L21 11.3 L18 12.9 Z" fill="#fff" stroke-width="1.3"/></g><g transform="translate(190.0,2078.4)" fill="none" stroke="#0b64b0" stroke-width="1.7"><rect x="0.9" y="0.9" width="4.4" height="4.4"/><rect x="9.8" y="0.9" width="4.4" height="4.4"/><rect x="18.7" y="0.9" width="4.4" height="4.4"/></g><g transform="translate(233.3,2069.6)" fill="none" stroke="#0b64b0" stroke-width="1.8" stroke-linejoin="round"><path d="M10.65 0.9 L20.6 6.6 V17.6 L10.65 23.3 L0.7 17.6 V6.6 Z M0.9 6.8 L10.65 12.6 L20.4 6.8"/></g></svg>
<span class="t" style="left:321.41px;top:2073.00px;font-size:23px;letter-spacing:0.707px;-webkit-text-stroke:0.3px;">Feb 14, 2024 @ 15:17...</span>
<span class="t" style="left:605.31px;top:2071.00px;font-size:23px;letter-spacing:0.622px;-webkit-text-stroke:0.3px;">Endpoint netwo...</span>
<svg style="left:814.8px;top:2080.7px" width="168.0" height="14.0" viewBox="0 0 24 2" preserveAspectRatio="none" shape-rendering="crispEdges"><path fill="#0b64b8" d="M0 0h1v1h-1zM2 0h1v1h-1zM13 0h1v1h-1zM21 0h1v1h-1zM23 0h1v1h-1zM11 1h1v1h-1z"/><path fill="#ecf3fa" d="M5 0h1v1h-1zM11 0h1v1h-1zM20 0h1v1h-1zM0 1h1v1h-1zM2 1h1v1h-1z"/><path fill="#86b6de" d="M7 0h1v1h-1z"/><path fill="#bfd8ee" d="M12 0h1v1h-1zM17 0h1v1h-1zM4 1h1v1h-1z"/></svg>
<span class="t" style="left:1021.72px;top:2071.00px;font-size:23px;letter-spacing:0.871px;-webkit-text-stroke:0.3px;">endpoint</span>
<span class="t" style="left:1228.62px;top:2071.00px;font-size:23px;letter-spacing:0.871px;-webkit-text-stroke:0.3px;">endpoint</span>
<span class="t" style="left:1436.52px;top:2071.00px;font-size:23px;letter-spacing:0.600px;-webkit-text-stroke:0.3px;">endpoint.event...</span>
<span class="t" style="left:1644.02px;top:2071.00px;font-size:23px;letter-spacing:0.543px;-webkit-text-stroke:0.3px;">connection_att...</span>
<span class="t" style="left:1850.87px;top:2071.00px;font-size:23px;color:#0b69b4;letter-spacing:1.518px;-webkit-text-stroke:0.3px;">root</span>
<svg style="left:2061.0px;top:2073.0px" width="133.0" height="21.0" viewBox="0 0 19 3" preserveAspectRatio="none" shape-rendering="crispEdges"><path fill="#0b64b8" d="M0 0h1v1h-1zM2 0h1v1h-1zM3 0h1v1h-1zM5 0h1v1h-1zM6 0h1v1h-1zM7 0h1v1h-1zM8 0h1v1h-1zM10 0h1v1h-1zM3 1h1v1h-1zM7 1h1v1h-1zM10 1h1v1h-1zM12 1h1v1h-1zM18 1h1v1h-1z"/><path fill="#bfd8ee" d="M12 0h1v1h-1zM13 0h1v1h-1z"/><path fill="#ecf3fa" d="M16 0h1v1h-1zM8 1h1v1h-1zM4 2h1v1h-1zM13 2h1v1h-1zM18 2h1v1h-1z"/><path fill="#86b6de" d="M2 1h1v1h-1zM16 1h1v1h-1z"/></svg>
<svg style="left:2271.2px;top:2073.0px" width="133.0" height="21.0" viewBox="0 0 19 3" preserveAspectRatio="none" shape-rendering="crispEdges"><path fill="#4a8fcc" d="M0 0h1v1h-1zM5 1h1v1h-1zM18 1h1v1h-1z"/><path fill="#bfd8ee" d="M7 0h1v1h-1zM8 0h1v1h-1zM12 1h1v1h-1zM2 2h1v1h-1z"/><path fill="#0b64b8" d="M9 0h1v1h-1zM12 0h1v1h-1zM13 0h1v1h-1zM15 0h1v1h-1zM16 0h1v1h-1zM17 0h1v1h-1zM18 0h1v1h-1zM8 1h1v1h-1zM13 1h1v1h-1zM15 1h1v1h-1zM16 1h1v1h-1zM17 1h1v1h-1z"/><path fill="#86b6de" d="M0 1h1v1h-1z"/><path fill="#ecf3fa" d="M3 1h1v1h-1zM14 2h1v1h-1z"/></svg>
</section>
<section role="row">
<div class="cb" style="left:47.1px;top:2118.2px;width:22.6px;height:22.6px;"></div>
<svg style="left:0;top:2115.5px" width="270" height="28" viewBox="0 2115.5 270 28"><g transform="translate(107.6,2118.9)" fill="none" stroke="#0b64b0" stroke-width="1.7" stroke-linecap="round" stroke-linejoin="round"><path d="M14.2 1 H19 Q20.4 1 20.4 2.4 V7.4 M17.3 4.2 L4.2 17.3 M1 14.4 V19.4 Q1 20.8 2.4 20.8 H7.2"/></g><g transform="translate(148.1,2117.5)" fill="none" stroke="#0b64b0" stroke-width="1.65" stroke-linejoin="round"><rect x="7.7" y="0.9" width="7" height="5" rx="1.3"/><path d="M11.2 5.9v1.5M3.9 16.9v-2M18.4 16.9v-2M0.5 11.3H21.6" /><rect x="0.9" y="16.9" width="6.2" height="4.7" rx="1.2"/><rect x="15.3" y="16.9" width="6.2" height="4.7" rx="1.2"/><circle cx="3.6" cy="11.3" r="1.35" fill="#fff"/><circle cx="11.2" cy="11.3" r="1.35" fill="#fff"/><path d="M18 9.7 L21 11.3 L18 12.9 Z" fill="#fff" stroke-width="1.3"/></g><g transform="translate(190.0,2126.4)" fill="none" stroke="#98a2b3" stroke-width="1.7"><rect x="0.9" y="0.9" width="4.4" height="4.4"/><rect x="9.8" y="0.9" width="4.4" height="4.4"/><rect x="18.7" y="0.9" width="4.4" height="4.4"/></g></svg>
<span class="t" style="left:321.41px;top:2121.00px;font-size:23px;letter-spacing:0.707px;-webkit-text-stroke:0.3px;">Feb 14, 2024 @ 15:17...</span>
<span class="t" style="left:607.20px;top:2117.00px;font-size:23px;-webkit-text-stroke:0.5px #343741;">—</span>
<svg style="left:814.8px;top:2122.0px" width="140.0" height="14.0" viewBox="0 0 20 2" preserveAspectRatio="none" shape-rendering="crispEdges"><path fill="#bfd8ee" d="M0 0h1v1h-1zM14 1h1v1h-1z"/><path fill="#ecf3fa" d="M1 0h1v1h-1zM14 0h1v1h-1zM10 1h1v1h-1zM16 1h1v1h-1zM17 1h1v1h-1z"/><path fill="#4a8fcc" d="M3 0h1v1h-1zM7 0h1v1h-1zM15 0h1v1h-1zM19 0h1v1h-1zM18 1h1v1h-1z"/><path fill="#86b6de" d="M5 0h1v1h-1zM8 0h1v1h-1zM0 1h1v1h-1zM5 1h1v1h-1z"/><path fill="#0b64b8" d="M7 1h1v1h-1zM11 1h1v1h-1zM12 1h1v1h-1z"/></svg>
<span class="t" style="left:1022.70px;top:2117.00px;font-size:23px;-webkit-text-stroke:0.5px #343741;">—</span>
<span class="t" style="left:1228.12px;top:2119.00px;font-size:23px;letter-spacing:0.947px;-webkit-text-stroke:0.3px;">packetbeat</span>
<span class="t" style="left:1437.17px;top:2119.00px;font-size:23px;letter-spacing:0.954px;-webkit-text-stroke:0.3px;">flow</span>
<span class="t" style="left:1643.47px;top:2119.00px;font-size:23px;letter-spacing:0.649px;-webkit-text-stroke:0.3px;">network_flow</span>
<span class="t" style="left:1852.40px;top:2117.00px;font-size:23px;-webkit-text-stroke:0.5px #343741;">—</span>
<svg style="left:2061.0px;top:2122.0px" width="119.0" height="14.0" viewBox="0 0 17 2" preserveAspectRatio="none" shape-rendering="crispEdges"><path fill="#4a8fcc" d="M0 0h1v1h-1zM8 0h1v1h-1zM12 1h1v1h-1z"/><path fill="#0b64b8" d="M2 0h1v1h-1zM3 0h1v1h-1zM5 0h1v1h-1zM6 0h1v1h-1zM7 0h1v1h-1zM10 0h1v1h-1zM16 0h1v1h-1zM3 1h1v1h-1zM7 1h1v1h-1zM10 1h1v1h-1zM16 1h1v1h-1z"/><path fill="#86b6de" d="M12 0h1v1h-1zM2 1h1v1h-1z"/><path fill="#bfd8ee" d="M8 1h1v1h-1z"/></svg>
<svg style="left:2271.2px;top:2122.0px" width="154.0" height="14.0" viewBox="0 0 22 2" preserveAspectRatio="none" shape-rendering="crispEdges"><path fill="#0b64b8" d="M2 0h1v1h-1zM15 0h1v1h-1zM17 0h1v1h-1zM18 0h1v1h-1zM8 1h1v1h-1zM14 1h1v1h-1zM15 1h1v1h-1zM21 1h1v1h-1z"/><path fill="#ecf3fa" d="M6 0h1v1h-1z"/><path fill="#4a8fcc" d="M8 0h1v1h-1zM13 0h1v1h-1zM20 0h1v1h-1zM20 1h1v1h-1z"/><path fill="#86b6de" d="M10 0h1v1h-1zM21 0h1v1h-1zM2 1h1v1h-1z"/><path fill="#bfd8ee" d="M3 1h1v1h-1zM6 1h1v1h-1z"/></svg>
</section>
<section role="row">
<div class="cb" style="left:47.1px;top:2166.2px;width:22.6px;height:22.6px;"></div>
<svg style="left:0;top:2163.5px" width="270" height="28" viewBox="0 2163.5 270 28"><g transform="translate(107.6,2166.9)" fill="none" stroke="#0b64b0" stroke-width="1.7" stroke-linecap="round" stroke-linejoin="round"><path d="M14.2 1 H19 Q20.4 1 20.4 2.4 V7.4 M17.3 4.2 L4.2 17.3 M1 14.4 V19.4 Q1 20.8 2.4 20.8 H7.2"/></g><g transform="translate(148.1,2165.5)" fill="none" stroke="#0b64b0" stroke-width="1.65" stroke-linejoin="round"><rect x="7.7" y="0.9" width="7" height="5" rx="1.3"/><path d="M11.2 5.9v1.5M3.9 16.9v-2M18.4 16.9v-2M0.5 11.3H21.6" /><rect x="0.9" y="16.9" width="6.2" height="4.7" rx="1.2"/><rect x="15.3" y="16.9" width="6.2" height="4.7" rx="1.2"/><circle cx="3.6" cy="11.3" r="1.35" fill="#fff"/><circle cx="11.2" cy="11.3" r="1.35" fill="#fff"/><path d="M18 9.7 L21 11.3 L18 12.9 Z" fill="#fff" stroke-width="1.3"/></g><g transform="translate(190.0,2174.4)" fill="none" stroke="#98a2b3" stroke-width="1.7"><rect x="0.9" y="0.9" width="4.4" height="4.4"/><rect x="9.8" y="0.9" width="4.4" height="4.4"/><rect x="18.7" y="0.9" width="4.4" height="4.4"/></g></svg>
<span class="t" style="left:321.41px;top:2169.00px;font-size:23px;letter-spacing:0.707px;-webkit-text-stroke:0.3px;">Feb 14, 2024 @ 15:17...</span>
<span class="t" style="left:607.20px;top:2165.00px;font-size:23px;-webkit-text-stroke:0.5px #343741;">—</span>
<svg style="left:814.8px;top:2171.2px" width="140.0" height="21.0" viewBox="0 0 20 3" preserveAspectRatio="none" shape-rendering="crispEdges"><path fill="#86b6de" d="M0 0h1v1h-1zM0 1h1v1h-1zM3 2h1v1h-1z"/><path fill="#0b64b8" d="M1 0h1v1h-1zM3 0h1v1h-1zM5 0h1v1h-1zM7 0h1v1h-1zM8 0h1v1h-1zM15 0h1v1h-1zM11 1h1v1h-1zM12 1h1v1h-1zM18 1h1v1h-1z"/><path fill="#bfd8ee" d="M14 0h1v1h-1zM14 1h1v1h-1z"/><path fill="#4a8fcc" d="M19 0h1v1h-1z"/><path fill="#ecf3fa" d="M7 1h1v1h-1z"/></svg>
<span class="t" style="left:1022.70px;top:2165.00px;font-size:23px;-webkit-text-stroke:0.5px #343741;">—</span>
<span class="t" style="left:1228.12px;top:2167.00px;font-size:23px;letter-spacing:0.947px;-webkit-text-stroke:0.3px;">packetbeat</span>
<span class="t" style="left:1437.17px;top:2167.00px;font-size:23px;letter-spacing:0.954px;-webkit-text-stroke:0.3px;">flow</span>
<span class="t" style="left:1643.47px;top:2167.00px;font-size:23px;letter-spacing:0.649px;-webkit-text-stroke:0.3px;">network_flow</span>
<span class="t" style="left:1852.40px;top:2165.00px;font-size:23px;-webkit-text-stroke:0.5px #343741;">—</span>
<svg style="left:2061.0px;top:2171.2px" width="133.0" height="14.0" viewBox="0 0 19 2" preserveAspectRatio="none" shape-rendering="crispEdges"><path fill="#4a8fcc" d="M2 0h1v1h-1zM12 0h1v1h-1zM12 1h1v1h-1z"/><path fill="#0b64b8" d="M3 0h1v1h-1zM6 0h1v1h-1zM7 0h1v1h-1zM10 0h1v1h-1zM16 0h1v1h-1zM2 1h1v1h-1zM3 1h1v1h-1zM7 1h1v1h-1zM10 1h1v1h-1zM16 1h1v1h-1z"/><path fill="#86b6de" d="M5 0h1v1h-1zM8 0h1v1h-1zM8 1h1v1h-1z"/><path fill="#ecf3fa" d="M18 0h1v1h-1z"/><path fill="#bfd8ee" d="M5 1h1v1h-1z"/></svg>
<svg style="left:2271.2px;top:2171.2px" width="133.0" height="14.0" viewBox="0 0 19 2" preserveAspectRatio="none" shape-rendering="crispEdges"><path fill="#4a8fcc" d="M0 0h1v1h-1zM0 1h1v1h-1zM8 1h1v1h-1zM12 1h1v1h-1z"/><path fill="#0b64b8" d="M8 0h1v1h-1zM13 0h1v1h-1zM15 0h1v1h-1zM16 0h1v1h-1zM17 0h1v1h-1zM5 1h1v1h-1zM13 1h1v1h-1zM16 1h1v1h-1zM17 1h1v1h-1z"/><path fill="#ecf3fa" d="M9 0h1v1h-1z"/><path fill="#86b6de" d="M12 0h1v1h-1zM18 1h1v1h-1z"/><path fill="#bfd8ee" d="M15 1h1v1h-1z"/></svg>
</section>
<section role="row">
<div class="cb" style="left:47.1px;top:2214.2px;width:22.6px;height:22.6px;"></div>
<svg style="left:0;top:2211.5px" width="270" height="28" viewBox="0 2211.5 270 28"><g transform="translate(107.6,2214.9)" fill="none" stroke="#0b64b0" stroke-width="1.7" stroke-linecap="round" stroke-linejoin="round"><path d="M14.2 1 H19 Q20.4 1 20.4 2.4 V7.4 M17.3 4.2 L4.2 17.3 M1 14.4 V19.4 Q1 20.8 2.4 20.8 H7.2"/></g><g transform="translate(148.1,2213.5)" fill="none" stroke="#0b64b0" stroke-width="1.65" stroke-linejoin="round"><rect x="7.7" y="0.9" width="7" height="5" rx="1.3"/><path d="M11.2 5.9v1.5M3.9 16.9v-2M18.4 16.9v-2M0.5 11.3H21.6" /><rect x="0.9" y="16.9" width="6.2" height="4.7" rx="1.2"/><rect x="15.3" y="16.9" width="6.2" height="4.7" rx="1.2"/><circle cx="3.6" cy="11.3" r="1.35" fill="#fff"/><circle cx="11.2" cy="11.3" r="1.35" fill="#fff"/><path d="M18 9.7 L21 11.3 L18 12.9 Z" fill="#fff" stroke-width="1.3"/></g><g transform="translate(190.0,2222.4)" fill="none" stroke="#98a2b3" stroke-width="1.7"><rect x="0.9" y="0.9" width="4.4" height="4.4"/><rect x="9.8" y="0.9" width="4.4" height="4.4"/><rect x="18.7" y="0.9" width="4.4" height="4.4"/></g></svg>
<span class="t" style="left:321.41px;top:2217.00px;font-size:23px;letter-spacing:0.707px;-webkit-text-stroke:0.3px;">Feb 14, 2024 @ 15:17...</span>
<span class="t" style="left:607.20px;top:2213.00px;font-size:23px;-webkit-text-stroke:0.5px #343741;">—</span>
<svg style="left:814.8px;top:2219.6px" width="140.0" height="21.0" viewBox="0 0 20 3" preserveAspectRatio="none" shape-rendering="crispEdges"><path fill="#86b6de" d="M0 0h1v1h-1zM19 0h1v1h-1zM0 1h1v1h-1z"/><path fill="#0b64b8" d="M1 0h1v1h-1zM15 0h1v1h-1zM11 1h1v1h-1zM12 1h1v1h-1zM18 1h1v1h-1zM3 2h1v1h-1z"/><path fill="#4a8fcc" d="M3 0h1v1h-1zM5 0h1v1h-1zM7 0h1v1h-1zM8 0h1v1h-1z"/><path fill="#bfd8ee" d="M12 0h1v1h-1zM14 0h1v1h-1zM14 1h1v1h-1z"/></svg>
<span class="t" style="left:1022.70px;top:2213.00px;font-size:23px;-webkit-text-stroke:0.5px #343741;">—</span>
<span class="t" style="left:1228.12px;top:2215.00px;font-size:23px;letter-spacing:0.947px;-webkit-text-stroke:0.3px;">packetbeat</span>
<span class="t" style="left:1437.17px;top:2215.00px;font-size:23px;letter-spacing:0.954px;-webkit-text-stroke:0.3px;">flow</span>
<span class="t" style="left:1643.47px;top:2215.00px;font-size:23px;letter-spacing:0.649px;-webkit-text-stroke:0.3px;">network_flow</span>
<span class="t" style="left:1852.40px;top:2213.00px;font-size:23px;-webkit-text-stroke:0.5px #343741;">—</span>
<svg style="left:2061.0px;top:2219.6px" width="133.0" height="14.0" viewBox="0 0 19 2" preserveAspectRatio="none" shape-rendering="crispEdges"><path fill="#86b6de" d="M2 0h1v1h-1z"/><path fill="#0b64b8" d="M3 0h1v1h-1zM6 0h1v1h-1zM7 0h1v1h-1zM10 0h1v1h-1zM12 0h1v1h-1zM18 0h1v1h-1zM2 1h1v1h-1zM3 1h1v1h-1zM5 1h1v1h-1zM7 1h1v1h-1zM8 1h1v1h-1zM10 1h1v1h-1z"/><path fill="#ecf3fa" d="M8 0h1v1h-1zM16 0h1v1h-1zM6 1h1v1h-1zM13 1h1v1h-1z"/><path fill="#bfd8ee" d="M14 0h1v1h-1zM4 1h1v1h-1zM12 1h1v1h-1z"/><path fill="#4a8fcc" d="M15 1h1v1h-1z"/></svg>
<svg style="left:2271.2px;top:2219.6px" width="133.0" height="14.0" viewBox="0 0 19 2" preserveAspectRatio="none" shape-rendering="crispEdges"><path fill="#4a8fcc" d="M0 0h1v1h-1zM0 1h1v1h-1zM5 1h1v1h-1z"/><path fill="#ecf3fa" d="M3 0h1v1h-1zM7 1h1v1h-1zM11 1h1v1h-1z"/><path fill="#0b64b8" d="M8 0h1v1h-1zM13 0h1v1h-1zM17 0h1v1h-1zM12 1h1v1h-1zM13 1h1v1h-1zM17 1h1v1h-1zM18 1h1v1h-1z"/><path fill="#bfd8ee" d="M12 0h1v1h-1zM18 0h1v1h-1zM14 1h1v1h-1z"/><path fill="#86b6de" d="M8 1h1v1h-1z"/></svg>
</section>
</main>
<div style="left:0.0px;top:2222.0px;width:2502.0px;height:20.0px;background:linear-gradient(to bottom,rgba(255,255,255,0),rgba(0,0,0,0.045))"></div>
</div><div id="frame"></div></body></html>
